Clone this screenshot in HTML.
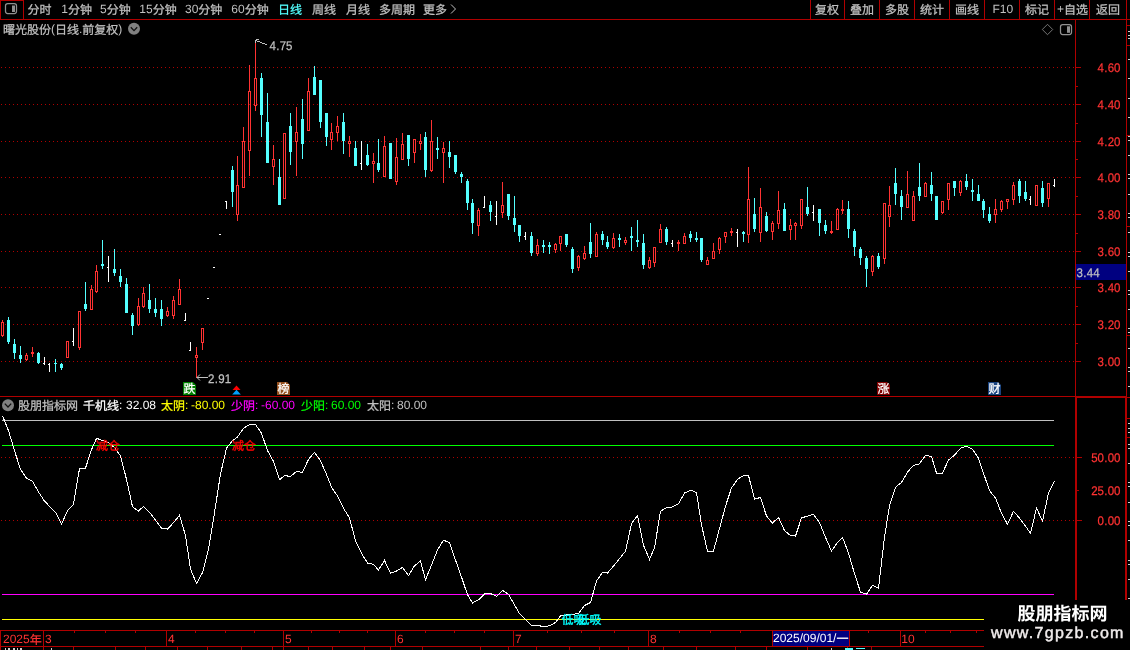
<!DOCTYPE html>
<html><head><meta charset="utf-8"><title>chart</title>
<style>
html,body{margin:0;padding:0;background:#000;overflow:hidden}
svg{display:block;font-family:"Liberation Sans","Noto Sans CJK SC",sans-serif;will-change:transform;text-rendering:geometricPrecision}
</style></head><body>
<svg width="1130" height="650" viewBox="0 0 1130 650">
<rect width="1130" height="650" fill="#000"/>
<g shape-rendering="crispEdges"><path shape-rendering="crispEdges" fill="#b00000" d="M0 0h24v1h-24zM0 0h1v20h-1zM23 0h1v20h-1zM0 19h1130v1h-1130zM810 0h1v20h-1zM844 0h1v20h-1zM879 0h1v20h-1zM914 0h1v20h-1zM949 0h1v20h-1zM984 0h1v20h-1zM1019 0h1v20h-1zM1054 0h1v20h-1zM1089 0h1v20h-1zM1126 0h1v397h-1zM1125 396h2v204h-2zM1075 19h1v378h-1zM1075 396h2v204h-2zM0 396h1076v1h-1076zM1075 396h52v2h-52zM1126 397h4v1h-4zM1126 25h4v1h-4zM1126 45h4v1h-4zM1127 335h3v1h-3zM1127 418h3v1h-3zM1127 437h3v1h-3zM1127 135h3v1h-3zM1127 226h3v1h-3zM0 630h984v1h-984zM0 646h984v1h-984zM0 630h1v20h-1zM1 67h1v1h-1zM5 67h1v1h-1zM9 67h1v1h-1zM13 67h1v1h-1zM17 67h1v1h-1zM21 67h1v1h-1zM25 67h1v1h-1zM29 67h1v1h-1zM33 67h1v1h-1zM37 67h1v1h-1zM41 67h1v1h-1zM45 67h1v1h-1zM49 67h1v1h-1zM53 67h1v1h-1zM57 67h1v1h-1zM61 67h1v1h-1zM65 67h1v1h-1zM69 67h1v1h-1zM73 67h1v1h-1zM77 67h1v1h-1zM81 67h1v1h-1zM85 67h1v1h-1zM89 67h1v1h-1zM93 67h1v1h-1zM97 67h1v1h-1zM101 67h1v1h-1zM105 67h1v1h-1zM109 67h1v1h-1zM113 67h1v1h-1zM117 67h1v1h-1zM121 67h1v1h-1zM125 67h1v1h-1zM129 67h1v1h-1zM133 67h1v1h-1zM137 67h1v1h-1zM141 67h1v1h-1zM145 67h1v1h-1zM149 67h1v1h-1zM153 67h1v1h-1zM157 67h1v1h-1zM161 67h1v1h-1zM165 67h1v1h-1zM169 67h1v1h-1zM173 67h1v1h-1zM177 67h1v1h-1zM181 67h1v1h-1zM185 67h1v1h-1zM189 67h1v1h-1zM193 67h1v1h-1zM197 67h1v1h-1zM201 67h1v1h-1zM205 67h1v1h-1zM209 67h1v1h-1zM213 67h1v1h-1zM217 67h1v1h-1zM221 67h1v1h-1zM225 67h1v1h-1zM229 67h1v1h-1zM233 67h1v1h-1zM237 67h1v1h-1zM241 67h1v1h-1zM245 67h1v1h-1zM249 67h1v1h-1zM253 67h1v1h-1zM257 67h1v1h-1zM261 67h1v1h-1zM265 67h1v1h-1zM269 67h1v1h-1zM273 67h1v1h-1zM277 67h1v1h-1zM281 67h1v1h-1zM285 67h1v1h-1zM289 67h1v1h-1zM293 67h1v1h-1zM297 67h1v1h-1zM301 67h1v1h-1zM305 67h1v1h-1zM309 67h1v1h-1zM313 67h1v1h-1zM317 67h1v1h-1zM321 67h1v1h-1zM325 67h1v1h-1zM329 67h1v1h-1zM333 67h1v1h-1zM337 67h1v1h-1zM341 67h1v1h-1zM345 67h1v1h-1zM349 67h1v1h-1zM353 67h1v1h-1zM357 67h1v1h-1zM361 67h1v1h-1zM365 67h1v1h-1zM369 67h1v1h-1zM373 67h1v1h-1zM377 67h1v1h-1zM381 67h1v1h-1zM385 67h1v1h-1zM389 67h1v1h-1zM393 67h1v1h-1zM397 67h1v1h-1zM401 67h1v1h-1zM405 67h1v1h-1zM409 67h1v1h-1zM413 67h1v1h-1zM417 67h1v1h-1zM421 67h1v1h-1zM425 67h1v1h-1zM429 67h1v1h-1zM433 67h1v1h-1zM437 67h1v1h-1zM441 67h1v1h-1zM445 67h1v1h-1zM449 67h1v1h-1zM453 67h1v1h-1zM457 67h1v1h-1zM461 67h1v1h-1zM465 67h1v1h-1zM469 67h1v1h-1zM473 67h1v1h-1zM477 67h1v1h-1zM481 67h1v1h-1zM485 67h1v1h-1zM489 67h1v1h-1zM493 67h1v1h-1zM497 67h1v1h-1zM501 67h1v1h-1zM505 67h1v1h-1zM509 67h1v1h-1zM513 67h1v1h-1zM517 67h1v1h-1zM521 67h1v1h-1zM525 67h1v1h-1zM529 67h1v1h-1zM533 67h1v1h-1zM537 67h1v1h-1zM541 67h1v1h-1zM545 67h1v1h-1zM549 67h1v1h-1zM553 67h1v1h-1zM557 67h1v1h-1zM561 67h1v1h-1zM565 67h1v1h-1zM569 67h1v1h-1zM573 67h1v1h-1zM577 67h1v1h-1zM581 67h1v1h-1zM585 67h1v1h-1zM589 67h1v1h-1zM593 67h1v1h-1zM597 67h1v1h-1zM601 67h1v1h-1zM605 67h1v1h-1zM609 67h1v1h-1zM613 67h1v1h-1zM617 67h1v1h-1zM621 67h1v1h-1zM625 67h1v1h-1zM629 67h1v1h-1zM633 67h1v1h-1zM637 67h1v1h-1zM641 67h1v1h-1zM645 67h1v1h-1zM649 67h1v1h-1zM653 67h1v1h-1zM657 67h1v1h-1zM661 67h1v1h-1zM665 67h1v1h-1zM669 67h1v1h-1zM673 67h1v1h-1zM677 67h1v1h-1zM681 67h1v1h-1zM685 67h1v1h-1zM689 67h1v1h-1zM693 67h1v1h-1zM697 67h1v1h-1zM701 67h1v1h-1zM705 67h1v1h-1zM709 67h1v1h-1zM713 67h1v1h-1zM717 67h1v1h-1zM721 67h1v1h-1zM725 67h1v1h-1zM729 67h1v1h-1zM733 67h1v1h-1zM737 67h1v1h-1zM741 67h1v1h-1zM745 67h1v1h-1zM749 67h1v1h-1zM753 67h1v1h-1zM757 67h1v1h-1zM761 67h1v1h-1zM765 67h1v1h-1zM769 67h1v1h-1zM773 67h1v1h-1zM777 67h1v1h-1zM781 67h1v1h-1zM785 67h1v1h-1zM789 67h1v1h-1zM793 67h1v1h-1zM797 67h1v1h-1zM801 67h1v1h-1zM805 67h1v1h-1zM809 67h1v1h-1zM813 67h1v1h-1zM817 67h1v1h-1zM821 67h1v1h-1zM825 67h1v1h-1zM829 67h1v1h-1zM833 67h1v1h-1zM837 67h1v1h-1zM841 67h1v1h-1zM845 67h1v1h-1zM849 67h1v1h-1zM853 67h1v1h-1zM857 67h1v1h-1zM861 67h1v1h-1zM865 67h1v1h-1zM869 67h1v1h-1zM873 67h1v1h-1zM877 67h1v1h-1zM881 67h1v1h-1zM885 67h1v1h-1zM889 67h1v1h-1zM893 67h1v1h-1zM897 67h1v1h-1zM901 67h1v1h-1zM905 67h1v1h-1zM909 67h1v1h-1zM913 67h1v1h-1zM917 67h1v1h-1zM921 67h1v1h-1zM925 67h1v1h-1zM929 67h1v1h-1zM933 67h1v1h-1zM937 67h1v1h-1zM941 67h1v1h-1zM945 67h1v1h-1zM949 67h1v1h-1zM953 67h1v1h-1zM957 67h1v1h-1zM961 67h1v1h-1zM965 67h1v1h-1zM969 67h1v1h-1zM973 67h1v1h-1zM977 67h1v1h-1zM981 67h1v1h-1zM985 67h1v1h-1zM989 67h1v1h-1zM993 67h1v1h-1zM997 67h1v1h-1zM1001 67h1v1h-1zM1005 67h1v1h-1zM1009 67h1v1h-1zM1013 67h1v1h-1zM1017 67h1v1h-1zM1021 67h1v1h-1zM1025 67h1v1h-1zM1029 67h1v1h-1zM1033 67h1v1h-1zM1037 67h1v1h-1zM1041 67h1v1h-1zM1045 67h1v1h-1zM1049 67h1v1h-1zM1053 67h1v1h-1zM1057 67h1v1h-1zM1061 67h1v1h-1zM1065 67h1v1h-1zM1069 67h1v1h-1zM1073 67h1v1h-1zM1076 67h5v1h-5zM1 104h1v1h-1zM5 104h1v1h-1zM9 104h1v1h-1zM13 104h1v1h-1zM17 104h1v1h-1zM21 104h1v1h-1zM25 104h1v1h-1zM29 104h1v1h-1zM33 104h1v1h-1zM37 104h1v1h-1zM41 104h1v1h-1zM45 104h1v1h-1zM49 104h1v1h-1zM53 104h1v1h-1zM57 104h1v1h-1zM61 104h1v1h-1zM65 104h1v1h-1zM69 104h1v1h-1zM73 104h1v1h-1zM77 104h1v1h-1zM81 104h1v1h-1zM85 104h1v1h-1zM89 104h1v1h-1zM93 104h1v1h-1zM97 104h1v1h-1zM101 104h1v1h-1zM105 104h1v1h-1zM109 104h1v1h-1zM113 104h1v1h-1zM117 104h1v1h-1zM121 104h1v1h-1zM125 104h1v1h-1zM129 104h1v1h-1zM133 104h1v1h-1zM137 104h1v1h-1zM141 104h1v1h-1zM145 104h1v1h-1zM149 104h1v1h-1zM153 104h1v1h-1zM157 104h1v1h-1zM161 104h1v1h-1zM165 104h1v1h-1zM169 104h1v1h-1zM173 104h1v1h-1zM177 104h1v1h-1zM181 104h1v1h-1zM185 104h1v1h-1zM189 104h1v1h-1zM193 104h1v1h-1zM197 104h1v1h-1zM201 104h1v1h-1zM205 104h1v1h-1zM209 104h1v1h-1zM213 104h1v1h-1zM217 104h1v1h-1zM221 104h1v1h-1zM225 104h1v1h-1zM229 104h1v1h-1zM233 104h1v1h-1zM237 104h1v1h-1zM241 104h1v1h-1zM245 104h1v1h-1zM249 104h1v1h-1zM253 104h1v1h-1zM257 104h1v1h-1zM261 104h1v1h-1zM265 104h1v1h-1zM269 104h1v1h-1zM273 104h1v1h-1zM277 104h1v1h-1zM281 104h1v1h-1zM285 104h1v1h-1zM289 104h1v1h-1zM293 104h1v1h-1zM297 104h1v1h-1zM301 104h1v1h-1zM305 104h1v1h-1zM309 104h1v1h-1zM313 104h1v1h-1zM317 104h1v1h-1zM321 104h1v1h-1zM325 104h1v1h-1zM329 104h1v1h-1zM333 104h1v1h-1zM337 104h1v1h-1zM341 104h1v1h-1zM345 104h1v1h-1zM349 104h1v1h-1zM353 104h1v1h-1zM357 104h1v1h-1zM361 104h1v1h-1zM365 104h1v1h-1zM369 104h1v1h-1zM373 104h1v1h-1zM377 104h1v1h-1zM381 104h1v1h-1zM385 104h1v1h-1zM389 104h1v1h-1zM393 104h1v1h-1zM397 104h1v1h-1zM401 104h1v1h-1zM405 104h1v1h-1zM409 104h1v1h-1zM413 104h1v1h-1zM417 104h1v1h-1zM421 104h1v1h-1zM425 104h1v1h-1zM429 104h1v1h-1zM433 104h1v1h-1zM437 104h1v1h-1zM441 104h1v1h-1zM445 104h1v1h-1zM449 104h1v1h-1zM453 104h1v1h-1zM457 104h1v1h-1zM461 104h1v1h-1zM465 104h1v1h-1zM469 104h1v1h-1zM473 104h1v1h-1zM477 104h1v1h-1zM481 104h1v1h-1zM485 104h1v1h-1zM489 104h1v1h-1zM493 104h1v1h-1zM497 104h1v1h-1zM501 104h1v1h-1zM505 104h1v1h-1zM509 104h1v1h-1zM513 104h1v1h-1zM517 104h1v1h-1zM521 104h1v1h-1zM525 104h1v1h-1zM529 104h1v1h-1zM533 104h1v1h-1zM537 104h1v1h-1zM541 104h1v1h-1zM545 104h1v1h-1zM549 104h1v1h-1zM553 104h1v1h-1zM557 104h1v1h-1zM561 104h1v1h-1zM565 104h1v1h-1zM569 104h1v1h-1zM573 104h1v1h-1zM577 104h1v1h-1zM581 104h1v1h-1zM585 104h1v1h-1zM589 104h1v1h-1zM593 104h1v1h-1zM597 104h1v1h-1zM601 104h1v1h-1zM605 104h1v1h-1zM609 104h1v1h-1zM613 104h1v1h-1zM617 104h1v1h-1zM621 104h1v1h-1zM625 104h1v1h-1zM629 104h1v1h-1zM633 104h1v1h-1zM637 104h1v1h-1zM641 104h1v1h-1zM645 104h1v1h-1zM649 104h1v1h-1zM653 104h1v1h-1zM657 104h1v1h-1zM661 104h1v1h-1zM665 104h1v1h-1zM669 104h1v1h-1zM673 104h1v1h-1zM677 104h1v1h-1zM681 104h1v1h-1zM685 104h1v1h-1zM689 104h1v1h-1zM693 104h1v1h-1zM697 104h1v1h-1zM701 104h1v1h-1zM705 104h1v1h-1zM709 104h1v1h-1zM713 104h1v1h-1zM717 104h1v1h-1zM721 104h1v1h-1zM725 104h1v1h-1zM729 104h1v1h-1zM733 104h1v1h-1zM737 104h1v1h-1zM741 104h1v1h-1zM745 104h1v1h-1zM749 104h1v1h-1zM753 104h1v1h-1zM757 104h1v1h-1zM761 104h1v1h-1zM765 104h1v1h-1zM769 104h1v1h-1zM773 104h1v1h-1zM777 104h1v1h-1zM781 104h1v1h-1zM785 104h1v1h-1zM789 104h1v1h-1zM793 104h1v1h-1zM797 104h1v1h-1zM801 104h1v1h-1zM805 104h1v1h-1zM809 104h1v1h-1zM813 104h1v1h-1zM817 104h1v1h-1zM821 104h1v1h-1zM825 104h1v1h-1zM829 104h1v1h-1zM833 104h1v1h-1zM837 104h1v1h-1zM841 104h1v1h-1zM845 104h1v1h-1zM849 104h1v1h-1zM853 104h1v1h-1zM857 104h1v1h-1zM861 104h1v1h-1zM865 104h1v1h-1zM869 104h1v1h-1zM873 104h1v1h-1zM877 104h1v1h-1zM881 104h1v1h-1zM885 104h1v1h-1zM889 104h1v1h-1zM893 104h1v1h-1zM897 104h1v1h-1zM901 104h1v1h-1zM905 104h1v1h-1zM909 104h1v1h-1zM913 104h1v1h-1zM917 104h1v1h-1zM921 104h1v1h-1zM925 104h1v1h-1zM929 104h1v1h-1zM933 104h1v1h-1zM937 104h1v1h-1zM941 104h1v1h-1zM945 104h1v1h-1zM949 104h1v1h-1zM953 104h1v1h-1zM957 104h1v1h-1zM961 104h1v1h-1zM965 104h1v1h-1zM969 104h1v1h-1zM973 104h1v1h-1zM977 104h1v1h-1zM981 104h1v1h-1zM985 104h1v1h-1zM989 104h1v1h-1zM993 104h1v1h-1zM997 104h1v1h-1zM1001 104h1v1h-1zM1005 104h1v1h-1zM1009 104h1v1h-1zM1013 104h1v1h-1zM1017 104h1v1h-1zM1021 104h1v1h-1zM1025 104h1v1h-1zM1029 104h1v1h-1zM1033 104h1v1h-1zM1037 104h1v1h-1zM1041 104h1v1h-1zM1045 104h1v1h-1zM1049 104h1v1h-1zM1053 104h1v1h-1zM1057 104h1v1h-1zM1061 104h1v1h-1zM1065 104h1v1h-1zM1069 104h1v1h-1zM1073 104h1v1h-1zM1076 104h5v1h-5zM1 141h1v1h-1zM5 141h1v1h-1zM9 141h1v1h-1zM13 141h1v1h-1zM17 141h1v1h-1zM21 141h1v1h-1zM25 141h1v1h-1zM29 141h1v1h-1zM33 141h1v1h-1zM37 141h1v1h-1zM41 141h1v1h-1zM45 141h1v1h-1zM49 141h1v1h-1zM53 141h1v1h-1zM57 141h1v1h-1zM61 141h1v1h-1zM65 141h1v1h-1zM69 141h1v1h-1zM73 141h1v1h-1zM77 141h1v1h-1zM81 141h1v1h-1zM85 141h1v1h-1zM89 141h1v1h-1zM93 141h1v1h-1zM97 141h1v1h-1zM101 141h1v1h-1zM105 141h1v1h-1zM109 141h1v1h-1zM113 141h1v1h-1zM117 141h1v1h-1zM121 141h1v1h-1zM125 141h1v1h-1zM129 141h1v1h-1zM133 141h1v1h-1zM137 141h1v1h-1zM141 141h1v1h-1zM145 141h1v1h-1zM149 141h1v1h-1zM153 141h1v1h-1zM157 141h1v1h-1zM161 141h1v1h-1zM165 141h1v1h-1zM169 141h1v1h-1zM173 141h1v1h-1zM177 141h1v1h-1zM181 141h1v1h-1zM185 141h1v1h-1zM189 141h1v1h-1zM193 141h1v1h-1zM197 141h1v1h-1zM201 141h1v1h-1zM205 141h1v1h-1zM209 141h1v1h-1zM213 141h1v1h-1zM217 141h1v1h-1zM221 141h1v1h-1zM225 141h1v1h-1zM229 141h1v1h-1zM233 141h1v1h-1zM237 141h1v1h-1zM241 141h1v1h-1zM245 141h1v1h-1zM249 141h1v1h-1zM253 141h1v1h-1zM257 141h1v1h-1zM261 141h1v1h-1zM265 141h1v1h-1zM269 141h1v1h-1zM273 141h1v1h-1zM277 141h1v1h-1zM281 141h1v1h-1zM285 141h1v1h-1zM289 141h1v1h-1zM293 141h1v1h-1zM297 141h1v1h-1zM301 141h1v1h-1zM305 141h1v1h-1zM309 141h1v1h-1zM313 141h1v1h-1zM317 141h1v1h-1zM321 141h1v1h-1zM325 141h1v1h-1zM329 141h1v1h-1zM333 141h1v1h-1zM337 141h1v1h-1zM341 141h1v1h-1zM345 141h1v1h-1zM349 141h1v1h-1zM353 141h1v1h-1zM357 141h1v1h-1zM361 141h1v1h-1zM365 141h1v1h-1zM369 141h1v1h-1zM373 141h1v1h-1zM377 141h1v1h-1zM381 141h1v1h-1zM385 141h1v1h-1zM389 141h1v1h-1zM393 141h1v1h-1zM397 141h1v1h-1zM401 141h1v1h-1zM405 141h1v1h-1zM409 141h1v1h-1zM413 141h1v1h-1zM417 141h1v1h-1zM421 141h1v1h-1zM425 141h1v1h-1zM429 141h1v1h-1zM433 141h1v1h-1zM437 141h1v1h-1zM441 141h1v1h-1zM445 141h1v1h-1zM449 141h1v1h-1zM453 141h1v1h-1zM457 141h1v1h-1zM461 141h1v1h-1zM465 141h1v1h-1zM469 141h1v1h-1zM473 141h1v1h-1zM477 141h1v1h-1zM481 141h1v1h-1zM485 141h1v1h-1zM489 141h1v1h-1zM493 141h1v1h-1zM497 141h1v1h-1zM501 141h1v1h-1zM505 141h1v1h-1zM509 141h1v1h-1zM513 141h1v1h-1zM517 141h1v1h-1zM521 141h1v1h-1zM525 141h1v1h-1zM529 141h1v1h-1zM533 141h1v1h-1zM537 141h1v1h-1zM541 141h1v1h-1zM545 141h1v1h-1zM549 141h1v1h-1zM553 141h1v1h-1zM557 141h1v1h-1zM561 141h1v1h-1zM565 141h1v1h-1zM569 141h1v1h-1zM573 141h1v1h-1zM577 141h1v1h-1zM581 141h1v1h-1zM585 141h1v1h-1zM589 141h1v1h-1zM593 141h1v1h-1zM597 141h1v1h-1zM601 141h1v1h-1zM605 141h1v1h-1zM609 141h1v1h-1zM613 141h1v1h-1zM617 141h1v1h-1zM621 141h1v1h-1zM625 141h1v1h-1zM629 141h1v1h-1zM633 141h1v1h-1zM637 141h1v1h-1zM641 141h1v1h-1zM645 141h1v1h-1zM649 141h1v1h-1zM653 141h1v1h-1zM657 141h1v1h-1zM661 141h1v1h-1zM665 141h1v1h-1zM669 141h1v1h-1zM673 141h1v1h-1zM677 141h1v1h-1zM681 141h1v1h-1zM685 141h1v1h-1zM689 141h1v1h-1zM693 141h1v1h-1zM697 141h1v1h-1zM701 141h1v1h-1zM705 141h1v1h-1zM709 141h1v1h-1zM713 141h1v1h-1zM717 141h1v1h-1zM721 141h1v1h-1zM725 141h1v1h-1zM729 141h1v1h-1zM733 141h1v1h-1zM737 141h1v1h-1zM741 141h1v1h-1zM745 141h1v1h-1zM749 141h1v1h-1zM753 141h1v1h-1zM757 141h1v1h-1zM761 141h1v1h-1zM765 141h1v1h-1zM769 141h1v1h-1zM773 141h1v1h-1zM777 141h1v1h-1zM781 141h1v1h-1zM785 141h1v1h-1zM789 141h1v1h-1zM793 141h1v1h-1zM797 141h1v1h-1zM801 141h1v1h-1zM805 141h1v1h-1zM809 141h1v1h-1zM813 141h1v1h-1zM817 141h1v1h-1zM821 141h1v1h-1zM825 141h1v1h-1zM829 141h1v1h-1zM833 141h1v1h-1zM837 141h1v1h-1zM841 141h1v1h-1zM845 141h1v1h-1zM849 141h1v1h-1zM853 141h1v1h-1zM857 141h1v1h-1zM861 141h1v1h-1zM865 141h1v1h-1zM869 141h1v1h-1zM873 141h1v1h-1zM877 141h1v1h-1zM881 141h1v1h-1zM885 141h1v1h-1zM889 141h1v1h-1zM893 141h1v1h-1zM897 141h1v1h-1zM901 141h1v1h-1zM905 141h1v1h-1zM909 141h1v1h-1zM913 141h1v1h-1zM917 141h1v1h-1zM921 141h1v1h-1zM925 141h1v1h-1zM929 141h1v1h-1zM933 141h1v1h-1zM937 141h1v1h-1zM941 141h1v1h-1zM945 141h1v1h-1zM949 141h1v1h-1zM953 141h1v1h-1zM957 141h1v1h-1zM961 141h1v1h-1zM965 141h1v1h-1zM969 141h1v1h-1zM973 141h1v1h-1zM977 141h1v1h-1zM981 141h1v1h-1zM985 141h1v1h-1zM989 141h1v1h-1zM993 141h1v1h-1zM997 141h1v1h-1zM1001 141h1v1h-1zM1005 141h1v1h-1zM1009 141h1v1h-1zM1013 141h1v1h-1zM1017 141h1v1h-1zM1021 141h1v1h-1zM1025 141h1v1h-1zM1029 141h1v1h-1zM1033 141h1v1h-1zM1037 141h1v1h-1zM1041 141h1v1h-1zM1045 141h1v1h-1zM1049 141h1v1h-1zM1053 141h1v1h-1zM1057 141h1v1h-1zM1061 141h1v1h-1zM1065 141h1v1h-1zM1069 141h1v1h-1zM1073 141h1v1h-1zM1076 141h5v1h-5zM1 177h1v1h-1zM5 177h1v1h-1zM9 177h1v1h-1zM13 177h1v1h-1zM17 177h1v1h-1zM21 177h1v1h-1zM25 177h1v1h-1zM29 177h1v1h-1zM33 177h1v1h-1zM37 177h1v1h-1zM41 177h1v1h-1zM45 177h1v1h-1zM49 177h1v1h-1zM53 177h1v1h-1zM57 177h1v1h-1zM61 177h1v1h-1zM65 177h1v1h-1zM69 177h1v1h-1zM73 177h1v1h-1zM77 177h1v1h-1zM81 177h1v1h-1zM85 177h1v1h-1zM89 177h1v1h-1zM93 177h1v1h-1zM97 177h1v1h-1zM101 177h1v1h-1zM105 177h1v1h-1zM109 177h1v1h-1zM113 177h1v1h-1zM117 177h1v1h-1zM121 177h1v1h-1zM125 177h1v1h-1zM129 177h1v1h-1zM133 177h1v1h-1zM137 177h1v1h-1zM141 177h1v1h-1zM145 177h1v1h-1zM149 177h1v1h-1zM153 177h1v1h-1zM157 177h1v1h-1zM161 177h1v1h-1zM165 177h1v1h-1zM169 177h1v1h-1zM173 177h1v1h-1zM177 177h1v1h-1zM181 177h1v1h-1zM185 177h1v1h-1zM189 177h1v1h-1zM193 177h1v1h-1zM197 177h1v1h-1zM201 177h1v1h-1zM205 177h1v1h-1zM209 177h1v1h-1zM213 177h1v1h-1zM217 177h1v1h-1zM221 177h1v1h-1zM225 177h1v1h-1zM229 177h1v1h-1zM233 177h1v1h-1zM237 177h1v1h-1zM241 177h1v1h-1zM245 177h1v1h-1zM249 177h1v1h-1zM253 177h1v1h-1zM257 177h1v1h-1zM261 177h1v1h-1zM265 177h1v1h-1zM269 177h1v1h-1zM273 177h1v1h-1zM277 177h1v1h-1zM281 177h1v1h-1zM285 177h1v1h-1zM289 177h1v1h-1zM293 177h1v1h-1zM297 177h1v1h-1zM301 177h1v1h-1zM305 177h1v1h-1zM309 177h1v1h-1zM313 177h1v1h-1zM317 177h1v1h-1zM321 177h1v1h-1zM325 177h1v1h-1zM329 177h1v1h-1zM333 177h1v1h-1zM337 177h1v1h-1zM341 177h1v1h-1zM345 177h1v1h-1zM349 177h1v1h-1zM353 177h1v1h-1zM357 177h1v1h-1zM361 177h1v1h-1zM365 177h1v1h-1zM369 177h1v1h-1zM373 177h1v1h-1zM377 177h1v1h-1zM381 177h1v1h-1zM385 177h1v1h-1zM389 177h1v1h-1zM393 177h1v1h-1zM397 177h1v1h-1zM401 177h1v1h-1zM405 177h1v1h-1zM409 177h1v1h-1zM413 177h1v1h-1zM417 177h1v1h-1zM421 177h1v1h-1zM425 177h1v1h-1zM429 177h1v1h-1zM433 177h1v1h-1zM437 177h1v1h-1zM441 177h1v1h-1zM445 177h1v1h-1zM449 177h1v1h-1zM453 177h1v1h-1zM457 177h1v1h-1zM461 177h1v1h-1zM465 177h1v1h-1zM469 177h1v1h-1zM473 177h1v1h-1zM477 177h1v1h-1zM481 177h1v1h-1zM485 177h1v1h-1zM489 177h1v1h-1zM493 177h1v1h-1zM497 177h1v1h-1zM501 177h1v1h-1zM505 177h1v1h-1zM509 177h1v1h-1zM513 177h1v1h-1zM517 177h1v1h-1zM521 177h1v1h-1zM525 177h1v1h-1zM529 177h1v1h-1zM533 177h1v1h-1zM537 177h1v1h-1zM541 177h1v1h-1zM545 177h1v1h-1zM549 177h1v1h-1zM553 177h1v1h-1zM557 177h1v1h-1zM561 177h1v1h-1zM565 177h1v1h-1zM569 177h1v1h-1zM573 177h1v1h-1zM577 177h1v1h-1zM581 177h1v1h-1zM585 177h1v1h-1zM589 177h1v1h-1zM593 177h1v1h-1zM597 177h1v1h-1zM601 177h1v1h-1zM605 177h1v1h-1zM609 177h1v1h-1zM613 177h1v1h-1zM617 177h1v1h-1zM621 177h1v1h-1zM625 177h1v1h-1zM629 177h1v1h-1zM633 177h1v1h-1zM637 177h1v1h-1zM641 177h1v1h-1zM645 177h1v1h-1zM649 177h1v1h-1zM653 177h1v1h-1zM657 177h1v1h-1zM661 177h1v1h-1zM665 177h1v1h-1zM669 177h1v1h-1zM673 177h1v1h-1zM677 177h1v1h-1zM681 177h1v1h-1zM685 177h1v1h-1zM689 177h1v1h-1zM693 177h1v1h-1zM697 177h1v1h-1zM701 177h1v1h-1zM705 177h1v1h-1zM709 177h1v1h-1zM713 177h1v1h-1zM717 177h1v1h-1zM721 177h1v1h-1zM725 177h1v1h-1zM729 177h1v1h-1zM733 177h1v1h-1zM737 177h1v1h-1zM741 177h1v1h-1zM745 177h1v1h-1zM749 177h1v1h-1zM753 177h1v1h-1zM757 177h1v1h-1zM761 177h1v1h-1zM765 177h1v1h-1zM769 177h1v1h-1zM773 177h1v1h-1zM777 177h1v1h-1zM781 177h1v1h-1zM785 177h1v1h-1zM789 177h1v1h-1zM793 177h1v1h-1zM797 177h1v1h-1zM801 177h1v1h-1zM805 177h1v1h-1zM809 177h1v1h-1zM813 177h1v1h-1zM817 177h1v1h-1zM821 177h1v1h-1zM825 177h1v1h-1zM829 177h1v1h-1zM833 177h1v1h-1zM837 177h1v1h-1zM841 177h1v1h-1zM845 177h1v1h-1zM849 177h1v1h-1zM853 177h1v1h-1zM857 177h1v1h-1zM861 177h1v1h-1zM865 177h1v1h-1zM869 177h1v1h-1zM873 177h1v1h-1zM877 177h1v1h-1zM881 177h1v1h-1zM885 177h1v1h-1zM889 177h1v1h-1zM893 177h1v1h-1zM897 177h1v1h-1zM901 177h1v1h-1zM905 177h1v1h-1zM909 177h1v1h-1zM913 177h1v1h-1zM917 177h1v1h-1zM921 177h1v1h-1zM925 177h1v1h-1zM929 177h1v1h-1zM933 177h1v1h-1zM937 177h1v1h-1zM941 177h1v1h-1zM945 177h1v1h-1zM949 177h1v1h-1zM953 177h1v1h-1zM957 177h1v1h-1zM961 177h1v1h-1zM965 177h1v1h-1zM969 177h1v1h-1zM973 177h1v1h-1zM977 177h1v1h-1zM981 177h1v1h-1zM985 177h1v1h-1zM989 177h1v1h-1zM993 177h1v1h-1zM997 177h1v1h-1zM1001 177h1v1h-1zM1005 177h1v1h-1zM1009 177h1v1h-1zM1013 177h1v1h-1zM1017 177h1v1h-1zM1021 177h1v1h-1zM1025 177h1v1h-1zM1029 177h1v1h-1zM1033 177h1v1h-1zM1037 177h1v1h-1zM1041 177h1v1h-1zM1045 177h1v1h-1zM1049 177h1v1h-1zM1053 177h1v1h-1zM1057 177h1v1h-1zM1061 177h1v1h-1zM1065 177h1v1h-1zM1069 177h1v1h-1zM1073 177h1v1h-1zM1076 177h5v1h-5zM1 214h1v1h-1zM5 214h1v1h-1zM9 214h1v1h-1zM13 214h1v1h-1zM17 214h1v1h-1zM21 214h1v1h-1zM25 214h1v1h-1zM29 214h1v1h-1zM33 214h1v1h-1zM37 214h1v1h-1zM41 214h1v1h-1zM45 214h1v1h-1zM49 214h1v1h-1zM53 214h1v1h-1zM57 214h1v1h-1zM61 214h1v1h-1zM65 214h1v1h-1zM69 214h1v1h-1zM73 214h1v1h-1zM77 214h1v1h-1zM81 214h1v1h-1zM85 214h1v1h-1zM89 214h1v1h-1zM93 214h1v1h-1zM97 214h1v1h-1zM101 214h1v1h-1zM105 214h1v1h-1zM109 214h1v1h-1zM113 214h1v1h-1zM117 214h1v1h-1zM121 214h1v1h-1zM125 214h1v1h-1zM129 214h1v1h-1zM133 214h1v1h-1zM137 214h1v1h-1zM141 214h1v1h-1zM145 214h1v1h-1zM149 214h1v1h-1zM153 214h1v1h-1zM157 214h1v1h-1zM161 214h1v1h-1zM165 214h1v1h-1zM169 214h1v1h-1zM173 214h1v1h-1zM177 214h1v1h-1zM181 214h1v1h-1zM185 214h1v1h-1zM189 214h1v1h-1zM193 214h1v1h-1zM197 214h1v1h-1zM201 214h1v1h-1zM205 214h1v1h-1zM209 214h1v1h-1zM213 214h1v1h-1zM217 214h1v1h-1zM221 214h1v1h-1zM225 214h1v1h-1zM229 214h1v1h-1zM233 214h1v1h-1zM237 214h1v1h-1zM241 214h1v1h-1zM245 214h1v1h-1zM249 214h1v1h-1zM253 214h1v1h-1zM257 214h1v1h-1zM261 214h1v1h-1zM265 214h1v1h-1zM269 214h1v1h-1zM273 214h1v1h-1zM277 214h1v1h-1zM281 214h1v1h-1zM285 214h1v1h-1zM289 214h1v1h-1zM293 214h1v1h-1zM297 214h1v1h-1zM301 214h1v1h-1zM305 214h1v1h-1zM309 214h1v1h-1zM313 214h1v1h-1zM317 214h1v1h-1zM321 214h1v1h-1zM325 214h1v1h-1zM329 214h1v1h-1zM333 214h1v1h-1zM337 214h1v1h-1zM341 214h1v1h-1zM345 214h1v1h-1zM349 214h1v1h-1zM353 214h1v1h-1zM357 214h1v1h-1zM361 214h1v1h-1zM365 214h1v1h-1zM369 214h1v1h-1zM373 214h1v1h-1zM377 214h1v1h-1zM381 214h1v1h-1zM385 214h1v1h-1zM389 214h1v1h-1zM393 214h1v1h-1zM397 214h1v1h-1zM401 214h1v1h-1zM405 214h1v1h-1zM409 214h1v1h-1zM413 214h1v1h-1zM417 214h1v1h-1zM421 214h1v1h-1zM425 214h1v1h-1zM429 214h1v1h-1zM433 214h1v1h-1zM437 214h1v1h-1zM441 214h1v1h-1zM445 214h1v1h-1zM449 214h1v1h-1zM453 214h1v1h-1zM457 214h1v1h-1zM461 214h1v1h-1zM465 214h1v1h-1zM469 214h1v1h-1zM473 214h1v1h-1zM477 214h1v1h-1zM481 214h1v1h-1zM485 214h1v1h-1zM489 214h1v1h-1zM493 214h1v1h-1zM497 214h1v1h-1zM501 214h1v1h-1zM505 214h1v1h-1zM509 214h1v1h-1zM513 214h1v1h-1zM517 214h1v1h-1zM521 214h1v1h-1zM525 214h1v1h-1zM529 214h1v1h-1zM533 214h1v1h-1zM537 214h1v1h-1zM541 214h1v1h-1zM545 214h1v1h-1zM549 214h1v1h-1zM553 214h1v1h-1zM557 214h1v1h-1zM561 214h1v1h-1zM565 214h1v1h-1zM569 214h1v1h-1zM573 214h1v1h-1zM577 214h1v1h-1zM581 214h1v1h-1zM585 214h1v1h-1zM589 214h1v1h-1zM593 214h1v1h-1zM597 214h1v1h-1zM601 214h1v1h-1zM605 214h1v1h-1zM609 214h1v1h-1zM613 214h1v1h-1zM617 214h1v1h-1zM621 214h1v1h-1zM625 214h1v1h-1zM629 214h1v1h-1zM633 214h1v1h-1zM637 214h1v1h-1zM641 214h1v1h-1zM645 214h1v1h-1zM649 214h1v1h-1zM653 214h1v1h-1zM657 214h1v1h-1zM661 214h1v1h-1zM665 214h1v1h-1zM669 214h1v1h-1zM673 214h1v1h-1zM677 214h1v1h-1zM681 214h1v1h-1zM685 214h1v1h-1zM689 214h1v1h-1zM693 214h1v1h-1zM697 214h1v1h-1zM701 214h1v1h-1zM705 214h1v1h-1zM709 214h1v1h-1zM713 214h1v1h-1zM717 214h1v1h-1zM721 214h1v1h-1zM725 214h1v1h-1zM729 214h1v1h-1zM733 214h1v1h-1zM737 214h1v1h-1zM741 214h1v1h-1zM745 214h1v1h-1zM749 214h1v1h-1zM753 214h1v1h-1zM757 214h1v1h-1zM761 214h1v1h-1zM765 214h1v1h-1zM769 214h1v1h-1zM773 214h1v1h-1zM777 214h1v1h-1zM781 214h1v1h-1zM785 214h1v1h-1zM789 214h1v1h-1zM793 214h1v1h-1zM797 214h1v1h-1zM801 214h1v1h-1zM805 214h1v1h-1zM809 214h1v1h-1zM813 214h1v1h-1zM817 214h1v1h-1zM821 214h1v1h-1zM825 214h1v1h-1zM829 214h1v1h-1zM833 214h1v1h-1zM837 214h1v1h-1zM841 214h1v1h-1zM845 214h1v1h-1zM849 214h1v1h-1zM853 214h1v1h-1zM857 214h1v1h-1zM861 214h1v1h-1zM865 214h1v1h-1zM869 214h1v1h-1zM873 214h1v1h-1zM877 214h1v1h-1zM881 214h1v1h-1zM885 214h1v1h-1zM889 214h1v1h-1zM893 214h1v1h-1zM897 214h1v1h-1zM901 214h1v1h-1zM905 214h1v1h-1zM909 214h1v1h-1zM913 214h1v1h-1zM917 214h1v1h-1zM921 214h1v1h-1zM925 214h1v1h-1zM929 214h1v1h-1zM933 214h1v1h-1zM937 214h1v1h-1zM941 214h1v1h-1zM945 214h1v1h-1zM949 214h1v1h-1zM953 214h1v1h-1zM957 214h1v1h-1zM961 214h1v1h-1zM965 214h1v1h-1zM969 214h1v1h-1zM973 214h1v1h-1zM977 214h1v1h-1zM981 214h1v1h-1zM985 214h1v1h-1zM989 214h1v1h-1zM993 214h1v1h-1zM997 214h1v1h-1zM1001 214h1v1h-1zM1005 214h1v1h-1zM1009 214h1v1h-1zM1013 214h1v1h-1zM1017 214h1v1h-1zM1021 214h1v1h-1zM1025 214h1v1h-1zM1029 214h1v1h-1zM1033 214h1v1h-1zM1037 214h1v1h-1zM1041 214h1v1h-1zM1045 214h1v1h-1zM1049 214h1v1h-1zM1053 214h1v1h-1zM1057 214h1v1h-1zM1061 214h1v1h-1zM1065 214h1v1h-1zM1069 214h1v1h-1zM1073 214h1v1h-1zM1076 214h5v1h-5zM1 251h1v1h-1zM5 251h1v1h-1zM9 251h1v1h-1zM13 251h1v1h-1zM17 251h1v1h-1zM21 251h1v1h-1zM25 251h1v1h-1zM29 251h1v1h-1zM33 251h1v1h-1zM37 251h1v1h-1zM41 251h1v1h-1zM45 251h1v1h-1zM49 251h1v1h-1zM53 251h1v1h-1zM57 251h1v1h-1zM61 251h1v1h-1zM65 251h1v1h-1zM69 251h1v1h-1zM73 251h1v1h-1zM77 251h1v1h-1zM81 251h1v1h-1zM85 251h1v1h-1zM89 251h1v1h-1zM93 251h1v1h-1zM97 251h1v1h-1zM101 251h1v1h-1zM105 251h1v1h-1zM109 251h1v1h-1zM113 251h1v1h-1zM117 251h1v1h-1zM121 251h1v1h-1zM125 251h1v1h-1zM129 251h1v1h-1zM133 251h1v1h-1zM137 251h1v1h-1zM141 251h1v1h-1zM145 251h1v1h-1zM149 251h1v1h-1zM153 251h1v1h-1zM157 251h1v1h-1zM161 251h1v1h-1zM165 251h1v1h-1zM169 251h1v1h-1zM173 251h1v1h-1zM177 251h1v1h-1zM181 251h1v1h-1zM185 251h1v1h-1zM189 251h1v1h-1zM193 251h1v1h-1zM197 251h1v1h-1zM201 251h1v1h-1zM205 251h1v1h-1zM209 251h1v1h-1zM213 251h1v1h-1zM217 251h1v1h-1zM221 251h1v1h-1zM225 251h1v1h-1zM229 251h1v1h-1zM233 251h1v1h-1zM237 251h1v1h-1zM241 251h1v1h-1zM245 251h1v1h-1zM249 251h1v1h-1zM253 251h1v1h-1zM257 251h1v1h-1zM261 251h1v1h-1zM265 251h1v1h-1zM269 251h1v1h-1zM273 251h1v1h-1zM277 251h1v1h-1zM281 251h1v1h-1zM285 251h1v1h-1zM289 251h1v1h-1zM293 251h1v1h-1zM297 251h1v1h-1zM301 251h1v1h-1zM305 251h1v1h-1zM309 251h1v1h-1zM313 251h1v1h-1zM317 251h1v1h-1zM321 251h1v1h-1zM325 251h1v1h-1zM329 251h1v1h-1zM333 251h1v1h-1zM337 251h1v1h-1zM341 251h1v1h-1zM345 251h1v1h-1zM349 251h1v1h-1zM353 251h1v1h-1zM357 251h1v1h-1zM361 251h1v1h-1zM365 251h1v1h-1zM369 251h1v1h-1zM373 251h1v1h-1zM377 251h1v1h-1zM381 251h1v1h-1zM385 251h1v1h-1zM389 251h1v1h-1zM393 251h1v1h-1zM397 251h1v1h-1zM401 251h1v1h-1zM405 251h1v1h-1zM409 251h1v1h-1zM413 251h1v1h-1zM417 251h1v1h-1zM421 251h1v1h-1zM425 251h1v1h-1zM429 251h1v1h-1zM433 251h1v1h-1zM437 251h1v1h-1zM441 251h1v1h-1zM445 251h1v1h-1zM449 251h1v1h-1zM453 251h1v1h-1zM457 251h1v1h-1zM461 251h1v1h-1zM465 251h1v1h-1zM469 251h1v1h-1zM473 251h1v1h-1zM477 251h1v1h-1zM481 251h1v1h-1zM485 251h1v1h-1zM489 251h1v1h-1zM493 251h1v1h-1zM497 251h1v1h-1zM501 251h1v1h-1zM505 251h1v1h-1zM509 251h1v1h-1zM513 251h1v1h-1zM517 251h1v1h-1zM521 251h1v1h-1zM525 251h1v1h-1zM529 251h1v1h-1zM533 251h1v1h-1zM537 251h1v1h-1zM541 251h1v1h-1zM545 251h1v1h-1zM549 251h1v1h-1zM553 251h1v1h-1zM557 251h1v1h-1zM561 251h1v1h-1zM565 251h1v1h-1zM569 251h1v1h-1zM573 251h1v1h-1zM577 251h1v1h-1zM581 251h1v1h-1zM585 251h1v1h-1zM589 251h1v1h-1zM593 251h1v1h-1zM597 251h1v1h-1zM601 251h1v1h-1zM605 251h1v1h-1zM609 251h1v1h-1zM613 251h1v1h-1zM617 251h1v1h-1zM621 251h1v1h-1zM625 251h1v1h-1zM629 251h1v1h-1zM633 251h1v1h-1zM637 251h1v1h-1zM641 251h1v1h-1zM645 251h1v1h-1zM649 251h1v1h-1zM653 251h1v1h-1zM657 251h1v1h-1zM661 251h1v1h-1zM665 251h1v1h-1zM669 251h1v1h-1zM673 251h1v1h-1zM677 251h1v1h-1zM681 251h1v1h-1zM685 251h1v1h-1zM689 251h1v1h-1zM693 251h1v1h-1zM697 251h1v1h-1zM701 251h1v1h-1zM705 251h1v1h-1zM709 251h1v1h-1zM713 251h1v1h-1zM717 251h1v1h-1zM721 251h1v1h-1zM725 251h1v1h-1zM729 251h1v1h-1zM733 251h1v1h-1zM737 251h1v1h-1zM741 251h1v1h-1zM745 251h1v1h-1zM749 251h1v1h-1zM753 251h1v1h-1zM757 251h1v1h-1zM761 251h1v1h-1zM765 251h1v1h-1zM769 251h1v1h-1zM773 251h1v1h-1zM777 251h1v1h-1zM781 251h1v1h-1zM785 251h1v1h-1zM789 251h1v1h-1zM793 251h1v1h-1zM797 251h1v1h-1zM801 251h1v1h-1zM805 251h1v1h-1zM809 251h1v1h-1zM813 251h1v1h-1zM817 251h1v1h-1zM821 251h1v1h-1zM825 251h1v1h-1zM829 251h1v1h-1zM833 251h1v1h-1zM837 251h1v1h-1zM841 251h1v1h-1zM845 251h1v1h-1zM849 251h1v1h-1zM853 251h1v1h-1zM857 251h1v1h-1zM861 251h1v1h-1zM865 251h1v1h-1zM869 251h1v1h-1zM873 251h1v1h-1zM877 251h1v1h-1zM881 251h1v1h-1zM885 251h1v1h-1zM889 251h1v1h-1zM893 251h1v1h-1zM897 251h1v1h-1zM901 251h1v1h-1zM905 251h1v1h-1zM909 251h1v1h-1zM913 251h1v1h-1zM917 251h1v1h-1zM921 251h1v1h-1zM925 251h1v1h-1zM929 251h1v1h-1zM933 251h1v1h-1zM937 251h1v1h-1zM941 251h1v1h-1zM945 251h1v1h-1zM949 251h1v1h-1zM953 251h1v1h-1zM957 251h1v1h-1zM961 251h1v1h-1zM965 251h1v1h-1zM969 251h1v1h-1zM973 251h1v1h-1zM977 251h1v1h-1zM981 251h1v1h-1zM985 251h1v1h-1zM989 251h1v1h-1zM993 251h1v1h-1zM997 251h1v1h-1zM1001 251h1v1h-1zM1005 251h1v1h-1zM1009 251h1v1h-1zM1013 251h1v1h-1zM1017 251h1v1h-1zM1021 251h1v1h-1zM1025 251h1v1h-1zM1029 251h1v1h-1zM1033 251h1v1h-1zM1037 251h1v1h-1zM1041 251h1v1h-1zM1045 251h1v1h-1zM1049 251h1v1h-1zM1053 251h1v1h-1zM1057 251h1v1h-1zM1061 251h1v1h-1zM1065 251h1v1h-1zM1069 251h1v1h-1zM1073 251h1v1h-1zM1076 251h5v1h-5zM1 287h1v1h-1zM5 287h1v1h-1zM9 287h1v1h-1zM13 287h1v1h-1zM17 287h1v1h-1zM21 287h1v1h-1zM25 287h1v1h-1zM29 287h1v1h-1zM33 287h1v1h-1zM37 287h1v1h-1zM41 287h1v1h-1zM45 287h1v1h-1zM49 287h1v1h-1zM53 287h1v1h-1zM57 287h1v1h-1zM61 287h1v1h-1zM65 287h1v1h-1zM69 287h1v1h-1zM73 287h1v1h-1zM77 287h1v1h-1zM81 287h1v1h-1zM85 287h1v1h-1zM89 287h1v1h-1zM93 287h1v1h-1zM97 287h1v1h-1zM101 287h1v1h-1zM105 287h1v1h-1zM109 287h1v1h-1zM113 287h1v1h-1zM117 287h1v1h-1zM121 287h1v1h-1zM125 287h1v1h-1zM129 287h1v1h-1zM133 287h1v1h-1zM137 287h1v1h-1zM141 287h1v1h-1zM145 287h1v1h-1zM149 287h1v1h-1zM153 287h1v1h-1zM157 287h1v1h-1zM161 287h1v1h-1zM165 287h1v1h-1zM169 287h1v1h-1zM173 287h1v1h-1zM177 287h1v1h-1zM181 287h1v1h-1zM185 287h1v1h-1zM189 287h1v1h-1zM193 287h1v1h-1zM197 287h1v1h-1zM201 287h1v1h-1zM205 287h1v1h-1zM209 287h1v1h-1zM213 287h1v1h-1zM217 287h1v1h-1zM221 287h1v1h-1zM225 287h1v1h-1zM229 287h1v1h-1zM233 287h1v1h-1zM237 287h1v1h-1zM241 287h1v1h-1zM245 287h1v1h-1zM249 287h1v1h-1zM253 287h1v1h-1zM257 287h1v1h-1zM261 287h1v1h-1zM265 287h1v1h-1zM269 287h1v1h-1zM273 287h1v1h-1zM277 287h1v1h-1zM281 287h1v1h-1zM285 287h1v1h-1zM289 287h1v1h-1zM293 287h1v1h-1zM297 287h1v1h-1zM301 287h1v1h-1zM305 287h1v1h-1zM309 287h1v1h-1zM313 287h1v1h-1zM317 287h1v1h-1zM321 287h1v1h-1zM325 287h1v1h-1zM329 287h1v1h-1zM333 287h1v1h-1zM337 287h1v1h-1zM341 287h1v1h-1zM345 287h1v1h-1zM349 287h1v1h-1zM353 287h1v1h-1zM357 287h1v1h-1zM361 287h1v1h-1zM365 287h1v1h-1zM369 287h1v1h-1zM373 287h1v1h-1zM377 287h1v1h-1zM381 287h1v1h-1zM385 287h1v1h-1zM389 287h1v1h-1zM393 287h1v1h-1zM397 287h1v1h-1zM401 287h1v1h-1zM405 287h1v1h-1zM409 287h1v1h-1zM413 287h1v1h-1zM417 287h1v1h-1zM421 287h1v1h-1zM425 287h1v1h-1zM429 287h1v1h-1zM433 287h1v1h-1zM437 287h1v1h-1zM441 287h1v1h-1zM445 287h1v1h-1zM449 287h1v1h-1zM453 287h1v1h-1zM457 287h1v1h-1zM461 287h1v1h-1zM465 287h1v1h-1zM469 287h1v1h-1zM473 287h1v1h-1zM477 287h1v1h-1zM481 287h1v1h-1zM485 287h1v1h-1zM489 287h1v1h-1zM493 287h1v1h-1zM497 287h1v1h-1zM501 287h1v1h-1zM505 287h1v1h-1zM509 287h1v1h-1zM513 287h1v1h-1zM517 287h1v1h-1zM521 287h1v1h-1zM525 287h1v1h-1zM529 287h1v1h-1zM533 287h1v1h-1zM537 287h1v1h-1zM541 287h1v1h-1zM545 287h1v1h-1zM549 287h1v1h-1zM553 287h1v1h-1zM557 287h1v1h-1zM561 287h1v1h-1zM565 287h1v1h-1zM569 287h1v1h-1zM573 287h1v1h-1zM577 287h1v1h-1zM581 287h1v1h-1zM585 287h1v1h-1zM589 287h1v1h-1zM593 287h1v1h-1zM597 287h1v1h-1zM601 287h1v1h-1zM605 287h1v1h-1zM609 287h1v1h-1zM613 287h1v1h-1zM617 287h1v1h-1zM621 287h1v1h-1zM625 287h1v1h-1zM629 287h1v1h-1zM633 287h1v1h-1zM637 287h1v1h-1zM641 287h1v1h-1zM645 287h1v1h-1zM649 287h1v1h-1zM653 287h1v1h-1zM657 287h1v1h-1zM661 287h1v1h-1zM665 287h1v1h-1zM669 287h1v1h-1zM673 287h1v1h-1zM677 287h1v1h-1zM681 287h1v1h-1zM685 287h1v1h-1zM689 287h1v1h-1zM693 287h1v1h-1zM697 287h1v1h-1zM701 287h1v1h-1zM705 287h1v1h-1zM709 287h1v1h-1zM713 287h1v1h-1zM717 287h1v1h-1zM721 287h1v1h-1zM725 287h1v1h-1zM729 287h1v1h-1zM733 287h1v1h-1zM737 287h1v1h-1zM741 287h1v1h-1zM745 287h1v1h-1zM749 287h1v1h-1zM753 287h1v1h-1zM757 287h1v1h-1zM761 287h1v1h-1zM765 287h1v1h-1zM769 287h1v1h-1zM773 287h1v1h-1zM777 287h1v1h-1zM781 287h1v1h-1zM785 287h1v1h-1zM789 287h1v1h-1zM793 287h1v1h-1zM797 287h1v1h-1zM801 287h1v1h-1zM805 287h1v1h-1zM809 287h1v1h-1zM813 287h1v1h-1zM817 287h1v1h-1zM821 287h1v1h-1zM825 287h1v1h-1zM829 287h1v1h-1zM833 287h1v1h-1zM837 287h1v1h-1zM841 287h1v1h-1zM845 287h1v1h-1zM849 287h1v1h-1zM853 287h1v1h-1zM857 287h1v1h-1zM861 287h1v1h-1zM865 287h1v1h-1zM869 287h1v1h-1zM873 287h1v1h-1zM877 287h1v1h-1zM881 287h1v1h-1zM885 287h1v1h-1zM889 287h1v1h-1zM893 287h1v1h-1zM897 287h1v1h-1zM901 287h1v1h-1zM905 287h1v1h-1zM909 287h1v1h-1zM913 287h1v1h-1zM917 287h1v1h-1zM921 287h1v1h-1zM925 287h1v1h-1zM929 287h1v1h-1zM933 287h1v1h-1zM937 287h1v1h-1zM941 287h1v1h-1zM945 287h1v1h-1zM949 287h1v1h-1zM953 287h1v1h-1zM957 287h1v1h-1zM961 287h1v1h-1zM965 287h1v1h-1zM969 287h1v1h-1zM973 287h1v1h-1zM977 287h1v1h-1zM981 287h1v1h-1zM985 287h1v1h-1zM989 287h1v1h-1zM993 287h1v1h-1zM997 287h1v1h-1zM1001 287h1v1h-1zM1005 287h1v1h-1zM1009 287h1v1h-1zM1013 287h1v1h-1zM1017 287h1v1h-1zM1021 287h1v1h-1zM1025 287h1v1h-1zM1029 287h1v1h-1zM1033 287h1v1h-1zM1037 287h1v1h-1zM1041 287h1v1h-1zM1045 287h1v1h-1zM1049 287h1v1h-1zM1053 287h1v1h-1zM1057 287h1v1h-1zM1061 287h1v1h-1zM1065 287h1v1h-1zM1069 287h1v1h-1zM1073 287h1v1h-1zM1076 287h5v1h-5zM1 324h1v1h-1zM5 324h1v1h-1zM9 324h1v1h-1zM13 324h1v1h-1zM17 324h1v1h-1zM21 324h1v1h-1zM25 324h1v1h-1zM29 324h1v1h-1zM33 324h1v1h-1zM37 324h1v1h-1zM41 324h1v1h-1zM45 324h1v1h-1zM49 324h1v1h-1zM53 324h1v1h-1zM57 324h1v1h-1zM61 324h1v1h-1zM65 324h1v1h-1zM69 324h1v1h-1zM73 324h1v1h-1zM77 324h1v1h-1zM81 324h1v1h-1zM85 324h1v1h-1zM89 324h1v1h-1zM93 324h1v1h-1zM97 324h1v1h-1zM101 324h1v1h-1zM105 324h1v1h-1zM109 324h1v1h-1zM113 324h1v1h-1zM117 324h1v1h-1zM121 324h1v1h-1zM125 324h1v1h-1zM129 324h1v1h-1zM133 324h1v1h-1zM137 324h1v1h-1zM141 324h1v1h-1zM145 324h1v1h-1zM149 324h1v1h-1zM153 324h1v1h-1zM157 324h1v1h-1zM161 324h1v1h-1zM165 324h1v1h-1zM169 324h1v1h-1zM173 324h1v1h-1zM177 324h1v1h-1zM181 324h1v1h-1zM185 324h1v1h-1zM189 324h1v1h-1zM193 324h1v1h-1zM197 324h1v1h-1zM201 324h1v1h-1zM205 324h1v1h-1zM209 324h1v1h-1zM213 324h1v1h-1zM217 324h1v1h-1zM221 324h1v1h-1zM225 324h1v1h-1zM229 324h1v1h-1zM233 324h1v1h-1zM237 324h1v1h-1zM241 324h1v1h-1zM245 324h1v1h-1zM249 324h1v1h-1zM253 324h1v1h-1zM257 324h1v1h-1zM261 324h1v1h-1zM265 324h1v1h-1zM269 324h1v1h-1zM273 324h1v1h-1zM277 324h1v1h-1zM281 324h1v1h-1zM285 324h1v1h-1zM289 324h1v1h-1zM293 324h1v1h-1zM297 324h1v1h-1zM301 324h1v1h-1zM305 324h1v1h-1zM309 324h1v1h-1zM313 324h1v1h-1zM317 324h1v1h-1zM321 324h1v1h-1zM325 324h1v1h-1zM329 324h1v1h-1zM333 324h1v1h-1zM337 324h1v1h-1zM341 324h1v1h-1zM345 324h1v1h-1zM349 324h1v1h-1zM353 324h1v1h-1zM357 324h1v1h-1zM361 324h1v1h-1zM365 324h1v1h-1zM369 324h1v1h-1zM373 324h1v1h-1zM377 324h1v1h-1zM381 324h1v1h-1zM385 324h1v1h-1zM389 324h1v1h-1zM393 324h1v1h-1zM397 324h1v1h-1zM401 324h1v1h-1zM405 324h1v1h-1zM409 324h1v1h-1zM413 324h1v1h-1zM417 324h1v1h-1zM421 324h1v1h-1zM425 324h1v1h-1zM429 324h1v1h-1zM433 324h1v1h-1zM437 324h1v1h-1zM441 324h1v1h-1zM445 324h1v1h-1zM449 324h1v1h-1zM453 324h1v1h-1zM457 324h1v1h-1zM461 324h1v1h-1zM465 324h1v1h-1zM469 324h1v1h-1zM473 324h1v1h-1zM477 324h1v1h-1zM481 324h1v1h-1zM485 324h1v1h-1zM489 324h1v1h-1zM493 324h1v1h-1zM497 324h1v1h-1zM501 324h1v1h-1zM505 324h1v1h-1zM509 324h1v1h-1zM513 324h1v1h-1zM517 324h1v1h-1zM521 324h1v1h-1zM525 324h1v1h-1zM529 324h1v1h-1zM533 324h1v1h-1zM537 324h1v1h-1zM541 324h1v1h-1zM545 324h1v1h-1zM549 324h1v1h-1zM553 324h1v1h-1zM557 324h1v1h-1zM561 324h1v1h-1zM565 324h1v1h-1zM569 324h1v1h-1zM573 324h1v1h-1zM577 324h1v1h-1zM581 324h1v1h-1zM585 324h1v1h-1zM589 324h1v1h-1zM593 324h1v1h-1zM597 324h1v1h-1zM601 324h1v1h-1zM605 324h1v1h-1zM609 324h1v1h-1zM613 324h1v1h-1zM617 324h1v1h-1zM621 324h1v1h-1zM625 324h1v1h-1zM629 324h1v1h-1zM633 324h1v1h-1zM637 324h1v1h-1zM641 324h1v1h-1zM645 324h1v1h-1zM649 324h1v1h-1zM653 324h1v1h-1zM657 324h1v1h-1zM661 324h1v1h-1zM665 324h1v1h-1zM669 324h1v1h-1zM673 324h1v1h-1zM677 324h1v1h-1zM681 324h1v1h-1zM685 324h1v1h-1zM689 324h1v1h-1zM693 324h1v1h-1zM697 324h1v1h-1zM701 324h1v1h-1zM705 324h1v1h-1zM709 324h1v1h-1zM713 324h1v1h-1zM717 324h1v1h-1zM721 324h1v1h-1zM725 324h1v1h-1zM729 324h1v1h-1zM733 324h1v1h-1zM737 324h1v1h-1zM741 324h1v1h-1zM745 324h1v1h-1zM749 324h1v1h-1zM753 324h1v1h-1zM757 324h1v1h-1zM761 324h1v1h-1zM765 324h1v1h-1zM769 324h1v1h-1zM773 324h1v1h-1zM777 324h1v1h-1zM781 324h1v1h-1zM785 324h1v1h-1zM789 324h1v1h-1zM793 324h1v1h-1zM797 324h1v1h-1zM801 324h1v1h-1zM805 324h1v1h-1zM809 324h1v1h-1zM813 324h1v1h-1zM817 324h1v1h-1zM821 324h1v1h-1zM825 324h1v1h-1zM829 324h1v1h-1zM833 324h1v1h-1zM837 324h1v1h-1zM841 324h1v1h-1zM845 324h1v1h-1zM849 324h1v1h-1zM853 324h1v1h-1zM857 324h1v1h-1zM861 324h1v1h-1zM865 324h1v1h-1zM869 324h1v1h-1zM873 324h1v1h-1zM877 324h1v1h-1zM881 324h1v1h-1zM885 324h1v1h-1zM889 324h1v1h-1zM893 324h1v1h-1zM897 324h1v1h-1zM901 324h1v1h-1zM905 324h1v1h-1zM909 324h1v1h-1zM913 324h1v1h-1zM917 324h1v1h-1zM921 324h1v1h-1zM925 324h1v1h-1zM929 324h1v1h-1zM933 324h1v1h-1zM937 324h1v1h-1zM941 324h1v1h-1zM945 324h1v1h-1zM949 324h1v1h-1zM953 324h1v1h-1zM957 324h1v1h-1zM961 324h1v1h-1zM965 324h1v1h-1zM969 324h1v1h-1zM973 324h1v1h-1zM977 324h1v1h-1zM981 324h1v1h-1zM985 324h1v1h-1zM989 324h1v1h-1zM993 324h1v1h-1zM997 324h1v1h-1zM1001 324h1v1h-1zM1005 324h1v1h-1zM1009 324h1v1h-1zM1013 324h1v1h-1zM1017 324h1v1h-1zM1021 324h1v1h-1zM1025 324h1v1h-1zM1029 324h1v1h-1zM1033 324h1v1h-1zM1037 324h1v1h-1zM1041 324h1v1h-1zM1045 324h1v1h-1zM1049 324h1v1h-1zM1053 324h1v1h-1zM1057 324h1v1h-1zM1061 324h1v1h-1zM1065 324h1v1h-1zM1069 324h1v1h-1zM1073 324h1v1h-1zM1076 324h5v1h-5zM1 361h1v1h-1zM5 361h1v1h-1zM9 361h1v1h-1zM13 361h1v1h-1zM17 361h1v1h-1zM21 361h1v1h-1zM25 361h1v1h-1zM29 361h1v1h-1zM33 361h1v1h-1zM37 361h1v1h-1zM41 361h1v1h-1zM45 361h1v1h-1zM49 361h1v1h-1zM53 361h1v1h-1zM57 361h1v1h-1zM61 361h1v1h-1zM65 361h1v1h-1zM69 361h1v1h-1zM73 361h1v1h-1zM77 361h1v1h-1zM81 361h1v1h-1zM85 361h1v1h-1zM89 361h1v1h-1zM93 361h1v1h-1zM97 361h1v1h-1zM101 361h1v1h-1zM105 361h1v1h-1zM109 361h1v1h-1zM113 361h1v1h-1zM117 361h1v1h-1zM121 361h1v1h-1zM125 361h1v1h-1zM129 361h1v1h-1zM133 361h1v1h-1zM137 361h1v1h-1zM141 361h1v1h-1zM145 361h1v1h-1zM149 361h1v1h-1zM153 361h1v1h-1zM157 361h1v1h-1zM161 361h1v1h-1zM165 361h1v1h-1zM169 361h1v1h-1zM173 361h1v1h-1zM177 361h1v1h-1zM181 361h1v1h-1zM185 361h1v1h-1zM189 361h1v1h-1zM193 361h1v1h-1zM197 361h1v1h-1zM201 361h1v1h-1zM205 361h1v1h-1zM209 361h1v1h-1zM213 361h1v1h-1zM217 361h1v1h-1zM221 361h1v1h-1zM225 361h1v1h-1zM229 361h1v1h-1zM233 361h1v1h-1zM237 361h1v1h-1zM241 361h1v1h-1zM245 361h1v1h-1zM249 361h1v1h-1zM253 361h1v1h-1zM257 361h1v1h-1zM261 361h1v1h-1zM265 361h1v1h-1zM269 361h1v1h-1zM273 361h1v1h-1zM277 361h1v1h-1zM281 361h1v1h-1zM285 361h1v1h-1zM289 361h1v1h-1zM293 361h1v1h-1zM297 361h1v1h-1zM301 361h1v1h-1zM305 361h1v1h-1zM309 361h1v1h-1zM313 361h1v1h-1zM317 361h1v1h-1zM321 361h1v1h-1zM325 361h1v1h-1zM329 361h1v1h-1zM333 361h1v1h-1zM337 361h1v1h-1zM341 361h1v1h-1zM345 361h1v1h-1zM349 361h1v1h-1zM353 361h1v1h-1zM357 361h1v1h-1zM361 361h1v1h-1zM365 361h1v1h-1zM369 361h1v1h-1zM373 361h1v1h-1zM377 361h1v1h-1zM381 361h1v1h-1zM385 361h1v1h-1zM389 361h1v1h-1zM393 361h1v1h-1zM397 361h1v1h-1zM401 361h1v1h-1zM405 361h1v1h-1zM409 361h1v1h-1zM413 361h1v1h-1zM417 361h1v1h-1zM421 361h1v1h-1zM425 361h1v1h-1zM429 361h1v1h-1zM433 361h1v1h-1zM437 361h1v1h-1zM441 361h1v1h-1zM445 361h1v1h-1zM449 361h1v1h-1zM453 361h1v1h-1zM457 361h1v1h-1zM461 361h1v1h-1zM465 361h1v1h-1zM469 361h1v1h-1zM473 361h1v1h-1zM477 361h1v1h-1zM481 361h1v1h-1zM485 361h1v1h-1zM489 361h1v1h-1zM493 361h1v1h-1zM497 361h1v1h-1zM501 361h1v1h-1zM505 361h1v1h-1zM509 361h1v1h-1zM513 361h1v1h-1zM517 361h1v1h-1zM521 361h1v1h-1zM525 361h1v1h-1zM529 361h1v1h-1zM533 361h1v1h-1zM537 361h1v1h-1zM541 361h1v1h-1zM545 361h1v1h-1zM549 361h1v1h-1zM553 361h1v1h-1zM557 361h1v1h-1zM561 361h1v1h-1zM565 361h1v1h-1zM569 361h1v1h-1zM573 361h1v1h-1zM577 361h1v1h-1zM581 361h1v1h-1zM585 361h1v1h-1zM589 361h1v1h-1zM593 361h1v1h-1zM597 361h1v1h-1zM601 361h1v1h-1zM605 361h1v1h-1zM609 361h1v1h-1zM613 361h1v1h-1zM617 361h1v1h-1zM621 361h1v1h-1zM625 361h1v1h-1zM629 361h1v1h-1zM633 361h1v1h-1zM637 361h1v1h-1zM641 361h1v1h-1zM645 361h1v1h-1zM649 361h1v1h-1zM653 361h1v1h-1zM657 361h1v1h-1zM661 361h1v1h-1zM665 361h1v1h-1zM669 361h1v1h-1zM673 361h1v1h-1zM677 361h1v1h-1zM681 361h1v1h-1zM685 361h1v1h-1zM689 361h1v1h-1zM693 361h1v1h-1zM697 361h1v1h-1zM701 361h1v1h-1zM705 361h1v1h-1zM709 361h1v1h-1zM713 361h1v1h-1zM717 361h1v1h-1zM721 361h1v1h-1zM725 361h1v1h-1zM729 361h1v1h-1zM733 361h1v1h-1zM737 361h1v1h-1zM741 361h1v1h-1zM745 361h1v1h-1zM749 361h1v1h-1zM753 361h1v1h-1zM757 361h1v1h-1zM761 361h1v1h-1zM765 361h1v1h-1zM769 361h1v1h-1zM773 361h1v1h-1zM777 361h1v1h-1zM781 361h1v1h-1zM785 361h1v1h-1zM789 361h1v1h-1zM793 361h1v1h-1zM797 361h1v1h-1zM801 361h1v1h-1zM805 361h1v1h-1zM809 361h1v1h-1zM813 361h1v1h-1zM817 361h1v1h-1zM821 361h1v1h-1zM825 361h1v1h-1zM829 361h1v1h-1zM833 361h1v1h-1zM837 361h1v1h-1zM841 361h1v1h-1zM845 361h1v1h-1zM849 361h1v1h-1zM853 361h1v1h-1zM857 361h1v1h-1zM861 361h1v1h-1zM865 361h1v1h-1zM869 361h1v1h-1zM873 361h1v1h-1zM877 361h1v1h-1zM881 361h1v1h-1zM885 361h1v1h-1zM889 361h1v1h-1zM893 361h1v1h-1zM897 361h1v1h-1zM901 361h1v1h-1zM905 361h1v1h-1zM909 361h1v1h-1zM913 361h1v1h-1zM917 361h1v1h-1zM921 361h1v1h-1zM925 361h1v1h-1zM929 361h1v1h-1zM933 361h1v1h-1zM937 361h1v1h-1zM941 361h1v1h-1zM945 361h1v1h-1zM949 361h1v1h-1zM953 361h1v1h-1zM957 361h1v1h-1zM961 361h1v1h-1zM965 361h1v1h-1zM969 361h1v1h-1zM973 361h1v1h-1zM977 361h1v1h-1zM981 361h1v1h-1zM985 361h1v1h-1zM989 361h1v1h-1zM993 361h1v1h-1zM997 361h1v1h-1zM1001 361h1v1h-1zM1005 361h1v1h-1zM1009 361h1v1h-1zM1013 361h1v1h-1zM1017 361h1v1h-1zM1021 361h1v1h-1zM1025 361h1v1h-1zM1029 361h1v1h-1zM1033 361h1v1h-1zM1037 361h1v1h-1zM1041 361h1v1h-1zM1045 361h1v1h-1zM1049 361h1v1h-1zM1053 361h1v1h-1zM1057 361h1v1h-1zM1061 361h1v1h-1zM1065 361h1v1h-1zM1069 361h1v1h-1zM1073 361h1v1h-1zM1076 361h5v1h-5zM1076 86h2v1h-2zM1076 123h2v1h-2zM1076 159h2v1h-2zM1076 196h2v1h-2zM1076 233h2v1h-2zM1076 269h2v1h-2zM1076 306h2v1h-2zM1076 343h2v1h-2zM1 457h1v1h-1zM5 457h1v1h-1zM9 457h1v1h-1zM13 457h1v1h-1zM17 457h1v1h-1zM21 457h1v1h-1zM25 457h1v1h-1zM29 457h1v1h-1zM33 457h1v1h-1zM37 457h1v1h-1zM41 457h1v1h-1zM45 457h1v1h-1zM49 457h1v1h-1zM53 457h1v1h-1zM57 457h1v1h-1zM61 457h1v1h-1zM65 457h1v1h-1zM69 457h1v1h-1zM73 457h1v1h-1zM77 457h1v1h-1zM81 457h1v1h-1zM85 457h1v1h-1zM89 457h1v1h-1zM93 457h1v1h-1zM97 457h1v1h-1zM101 457h1v1h-1zM105 457h1v1h-1zM109 457h1v1h-1zM113 457h1v1h-1zM117 457h1v1h-1zM121 457h1v1h-1zM125 457h1v1h-1zM129 457h1v1h-1zM133 457h1v1h-1zM137 457h1v1h-1zM141 457h1v1h-1zM145 457h1v1h-1zM149 457h1v1h-1zM153 457h1v1h-1zM157 457h1v1h-1zM161 457h1v1h-1zM165 457h1v1h-1zM169 457h1v1h-1zM173 457h1v1h-1zM177 457h1v1h-1zM181 457h1v1h-1zM185 457h1v1h-1zM189 457h1v1h-1zM193 457h1v1h-1zM197 457h1v1h-1zM201 457h1v1h-1zM205 457h1v1h-1zM209 457h1v1h-1zM213 457h1v1h-1zM217 457h1v1h-1zM221 457h1v1h-1zM225 457h1v1h-1zM229 457h1v1h-1zM233 457h1v1h-1zM237 457h1v1h-1zM241 457h1v1h-1zM245 457h1v1h-1zM249 457h1v1h-1zM253 457h1v1h-1zM257 457h1v1h-1zM261 457h1v1h-1zM265 457h1v1h-1zM269 457h1v1h-1zM273 457h1v1h-1zM277 457h1v1h-1zM281 457h1v1h-1zM285 457h1v1h-1zM289 457h1v1h-1zM293 457h1v1h-1zM297 457h1v1h-1zM301 457h1v1h-1zM305 457h1v1h-1zM309 457h1v1h-1zM313 457h1v1h-1zM317 457h1v1h-1zM321 457h1v1h-1zM325 457h1v1h-1zM329 457h1v1h-1zM333 457h1v1h-1zM337 457h1v1h-1zM341 457h1v1h-1zM345 457h1v1h-1zM349 457h1v1h-1zM353 457h1v1h-1zM357 457h1v1h-1zM361 457h1v1h-1zM365 457h1v1h-1zM369 457h1v1h-1zM373 457h1v1h-1zM377 457h1v1h-1zM381 457h1v1h-1zM385 457h1v1h-1zM389 457h1v1h-1zM393 457h1v1h-1zM397 457h1v1h-1zM401 457h1v1h-1zM405 457h1v1h-1zM409 457h1v1h-1zM413 457h1v1h-1zM417 457h1v1h-1zM421 457h1v1h-1zM425 457h1v1h-1zM429 457h1v1h-1zM433 457h1v1h-1zM437 457h1v1h-1zM441 457h1v1h-1zM445 457h1v1h-1zM449 457h1v1h-1zM453 457h1v1h-1zM457 457h1v1h-1zM461 457h1v1h-1zM465 457h1v1h-1zM469 457h1v1h-1zM473 457h1v1h-1zM477 457h1v1h-1zM481 457h1v1h-1zM485 457h1v1h-1zM489 457h1v1h-1zM493 457h1v1h-1zM497 457h1v1h-1zM501 457h1v1h-1zM505 457h1v1h-1zM509 457h1v1h-1zM513 457h1v1h-1zM517 457h1v1h-1zM521 457h1v1h-1zM525 457h1v1h-1zM529 457h1v1h-1zM533 457h1v1h-1zM537 457h1v1h-1zM541 457h1v1h-1zM545 457h1v1h-1zM549 457h1v1h-1zM553 457h1v1h-1zM557 457h1v1h-1zM561 457h1v1h-1zM565 457h1v1h-1zM569 457h1v1h-1zM573 457h1v1h-1zM577 457h1v1h-1zM581 457h1v1h-1zM585 457h1v1h-1zM589 457h1v1h-1zM593 457h1v1h-1zM597 457h1v1h-1zM601 457h1v1h-1zM605 457h1v1h-1zM609 457h1v1h-1zM613 457h1v1h-1zM617 457h1v1h-1zM621 457h1v1h-1zM625 457h1v1h-1zM629 457h1v1h-1zM633 457h1v1h-1zM637 457h1v1h-1zM641 457h1v1h-1zM645 457h1v1h-1zM649 457h1v1h-1zM653 457h1v1h-1zM657 457h1v1h-1zM661 457h1v1h-1zM665 457h1v1h-1zM669 457h1v1h-1zM673 457h1v1h-1zM677 457h1v1h-1zM681 457h1v1h-1zM685 457h1v1h-1zM689 457h1v1h-1zM693 457h1v1h-1zM697 457h1v1h-1zM701 457h1v1h-1zM705 457h1v1h-1zM709 457h1v1h-1zM713 457h1v1h-1zM717 457h1v1h-1zM721 457h1v1h-1zM725 457h1v1h-1zM729 457h1v1h-1zM733 457h1v1h-1zM737 457h1v1h-1zM741 457h1v1h-1zM745 457h1v1h-1zM749 457h1v1h-1zM753 457h1v1h-1zM757 457h1v1h-1zM761 457h1v1h-1zM765 457h1v1h-1zM769 457h1v1h-1zM773 457h1v1h-1zM777 457h1v1h-1zM781 457h1v1h-1zM785 457h1v1h-1zM789 457h1v1h-1zM793 457h1v1h-1zM797 457h1v1h-1zM801 457h1v1h-1zM805 457h1v1h-1zM809 457h1v1h-1zM813 457h1v1h-1zM817 457h1v1h-1zM821 457h1v1h-1zM825 457h1v1h-1zM829 457h1v1h-1zM833 457h1v1h-1zM837 457h1v1h-1zM841 457h1v1h-1zM845 457h1v1h-1zM849 457h1v1h-1zM853 457h1v1h-1zM857 457h1v1h-1zM861 457h1v1h-1zM865 457h1v1h-1zM869 457h1v1h-1zM873 457h1v1h-1zM877 457h1v1h-1zM881 457h1v1h-1zM885 457h1v1h-1zM889 457h1v1h-1zM893 457h1v1h-1zM897 457h1v1h-1zM901 457h1v1h-1zM905 457h1v1h-1zM909 457h1v1h-1zM913 457h1v1h-1zM917 457h1v1h-1zM921 457h1v1h-1zM925 457h1v1h-1zM929 457h1v1h-1zM933 457h1v1h-1zM937 457h1v1h-1zM941 457h1v1h-1zM945 457h1v1h-1zM949 457h1v1h-1zM953 457h1v1h-1zM957 457h1v1h-1zM961 457h1v1h-1zM965 457h1v1h-1zM969 457h1v1h-1zM973 457h1v1h-1zM977 457h1v1h-1zM981 457h1v1h-1zM985 457h1v1h-1zM989 457h1v1h-1zM993 457h1v1h-1zM997 457h1v1h-1zM1001 457h1v1h-1zM1005 457h1v1h-1zM1009 457h1v1h-1zM1013 457h1v1h-1zM1017 457h1v1h-1zM1021 457h1v1h-1zM1025 457h1v1h-1zM1029 457h1v1h-1zM1033 457h1v1h-1zM1037 457h1v1h-1zM1041 457h1v1h-1zM1045 457h1v1h-1zM1049 457h1v1h-1zM1053 457h1v1h-1zM1057 457h1v1h-1zM1061 457h1v1h-1zM1065 457h1v1h-1zM1069 457h1v1h-1zM1073 457h1v1h-1zM1077 457h5v1h-5zM1 520h1v1h-1zM5 520h1v1h-1zM9 520h1v1h-1zM13 520h1v1h-1zM17 520h1v1h-1zM21 520h1v1h-1zM25 520h1v1h-1zM29 520h1v1h-1zM33 520h1v1h-1zM37 520h1v1h-1zM41 520h1v1h-1zM45 520h1v1h-1zM49 520h1v1h-1zM53 520h1v1h-1zM57 520h1v1h-1zM61 520h1v1h-1zM65 520h1v1h-1zM69 520h1v1h-1zM73 520h1v1h-1zM77 520h1v1h-1zM81 520h1v1h-1zM85 520h1v1h-1zM89 520h1v1h-1zM93 520h1v1h-1zM97 520h1v1h-1zM101 520h1v1h-1zM105 520h1v1h-1zM109 520h1v1h-1zM113 520h1v1h-1zM117 520h1v1h-1zM121 520h1v1h-1zM125 520h1v1h-1zM129 520h1v1h-1zM133 520h1v1h-1zM137 520h1v1h-1zM141 520h1v1h-1zM145 520h1v1h-1zM149 520h1v1h-1zM153 520h1v1h-1zM157 520h1v1h-1zM161 520h1v1h-1zM165 520h1v1h-1zM169 520h1v1h-1zM173 520h1v1h-1zM177 520h1v1h-1zM181 520h1v1h-1zM185 520h1v1h-1zM189 520h1v1h-1zM193 520h1v1h-1zM197 520h1v1h-1zM201 520h1v1h-1zM205 520h1v1h-1zM209 520h1v1h-1zM213 520h1v1h-1zM217 520h1v1h-1zM221 520h1v1h-1zM225 520h1v1h-1zM229 520h1v1h-1zM233 520h1v1h-1zM237 520h1v1h-1zM241 520h1v1h-1zM245 520h1v1h-1zM249 520h1v1h-1zM253 520h1v1h-1zM257 520h1v1h-1zM261 520h1v1h-1zM265 520h1v1h-1zM269 520h1v1h-1zM273 520h1v1h-1zM277 520h1v1h-1zM281 520h1v1h-1zM285 520h1v1h-1zM289 520h1v1h-1zM293 520h1v1h-1zM297 520h1v1h-1zM301 520h1v1h-1zM305 520h1v1h-1zM309 520h1v1h-1zM313 520h1v1h-1zM317 520h1v1h-1zM321 520h1v1h-1zM325 520h1v1h-1zM329 520h1v1h-1zM333 520h1v1h-1zM337 520h1v1h-1zM341 520h1v1h-1zM345 520h1v1h-1zM349 520h1v1h-1zM353 520h1v1h-1zM357 520h1v1h-1zM361 520h1v1h-1zM365 520h1v1h-1zM369 520h1v1h-1zM373 520h1v1h-1zM377 520h1v1h-1zM381 520h1v1h-1zM385 520h1v1h-1zM389 520h1v1h-1zM393 520h1v1h-1zM397 520h1v1h-1zM401 520h1v1h-1zM405 520h1v1h-1zM409 520h1v1h-1zM413 520h1v1h-1zM417 520h1v1h-1zM421 520h1v1h-1zM425 520h1v1h-1zM429 520h1v1h-1zM433 520h1v1h-1zM437 520h1v1h-1zM441 520h1v1h-1zM445 520h1v1h-1zM449 520h1v1h-1zM453 520h1v1h-1zM457 520h1v1h-1zM461 520h1v1h-1zM465 520h1v1h-1zM469 520h1v1h-1zM473 520h1v1h-1zM477 520h1v1h-1zM481 520h1v1h-1zM485 520h1v1h-1zM489 520h1v1h-1zM493 520h1v1h-1zM497 520h1v1h-1zM501 520h1v1h-1zM505 520h1v1h-1zM509 520h1v1h-1zM513 520h1v1h-1zM517 520h1v1h-1zM521 520h1v1h-1zM525 520h1v1h-1zM529 520h1v1h-1zM533 520h1v1h-1zM537 520h1v1h-1zM541 520h1v1h-1zM545 520h1v1h-1zM549 520h1v1h-1zM553 520h1v1h-1zM557 520h1v1h-1zM561 520h1v1h-1zM565 520h1v1h-1zM569 520h1v1h-1zM573 520h1v1h-1zM577 520h1v1h-1zM581 520h1v1h-1zM585 520h1v1h-1zM589 520h1v1h-1zM593 520h1v1h-1zM597 520h1v1h-1zM601 520h1v1h-1zM605 520h1v1h-1zM609 520h1v1h-1zM613 520h1v1h-1zM617 520h1v1h-1zM621 520h1v1h-1zM625 520h1v1h-1zM629 520h1v1h-1zM633 520h1v1h-1zM637 520h1v1h-1zM641 520h1v1h-1zM645 520h1v1h-1zM649 520h1v1h-1zM653 520h1v1h-1zM657 520h1v1h-1zM661 520h1v1h-1zM665 520h1v1h-1zM669 520h1v1h-1zM673 520h1v1h-1zM677 520h1v1h-1zM681 520h1v1h-1zM685 520h1v1h-1zM689 520h1v1h-1zM693 520h1v1h-1zM697 520h1v1h-1zM701 520h1v1h-1zM705 520h1v1h-1zM709 520h1v1h-1zM713 520h1v1h-1zM717 520h1v1h-1zM721 520h1v1h-1zM725 520h1v1h-1zM729 520h1v1h-1zM733 520h1v1h-1zM737 520h1v1h-1zM741 520h1v1h-1zM745 520h1v1h-1zM749 520h1v1h-1zM753 520h1v1h-1zM757 520h1v1h-1zM761 520h1v1h-1zM765 520h1v1h-1zM769 520h1v1h-1zM773 520h1v1h-1zM777 520h1v1h-1zM781 520h1v1h-1zM785 520h1v1h-1zM789 520h1v1h-1zM793 520h1v1h-1zM797 520h1v1h-1zM801 520h1v1h-1zM805 520h1v1h-1zM809 520h1v1h-1zM813 520h1v1h-1zM817 520h1v1h-1zM821 520h1v1h-1zM825 520h1v1h-1zM829 520h1v1h-1zM833 520h1v1h-1zM837 520h1v1h-1zM841 520h1v1h-1zM845 520h1v1h-1zM849 520h1v1h-1zM853 520h1v1h-1zM857 520h1v1h-1zM861 520h1v1h-1zM865 520h1v1h-1zM869 520h1v1h-1zM873 520h1v1h-1zM877 520h1v1h-1zM881 520h1v1h-1zM885 520h1v1h-1zM889 520h1v1h-1zM893 520h1v1h-1zM897 520h1v1h-1zM901 520h1v1h-1zM905 520h1v1h-1zM909 520h1v1h-1zM913 520h1v1h-1zM917 520h1v1h-1zM921 520h1v1h-1zM925 520h1v1h-1zM929 520h1v1h-1zM933 520h1v1h-1zM937 520h1v1h-1zM941 520h1v1h-1zM945 520h1v1h-1zM949 520h1v1h-1zM953 520h1v1h-1zM957 520h1v1h-1zM961 520h1v1h-1zM965 520h1v1h-1zM969 520h1v1h-1zM973 520h1v1h-1zM977 520h1v1h-1zM981 520h1v1h-1zM985 520h1v1h-1zM989 520h1v1h-1zM993 520h1v1h-1zM997 520h1v1h-1zM1001 520h1v1h-1zM1005 520h1v1h-1zM1009 520h1v1h-1zM1013 520h1v1h-1zM1017 520h1v1h-1zM1021 520h1v1h-1zM1025 520h1v1h-1zM1029 520h1v1h-1zM1033 520h1v1h-1zM1037 520h1v1h-1zM1041 520h1v1h-1zM1045 520h1v1h-1zM1049 520h1v1h-1zM1053 520h1v1h-1zM1057 520h1v1h-1zM1061 520h1v1h-1zM1065 520h1v1h-1zM1069 520h1v1h-1zM1073 520h1v1h-1zM1077 520h5v1h-5zM1077 490h2v1h-2z"/><path shape-rendering="crispEdges" fill="#d0d0d0" d="M1128 59h2v1h-2zM1128 78h2v1h-2zM1128 98h2v1h-2zM1128 117h2v1h-2zM1128 136h2v1h-2zM1128 140h2v1h-2zM1128 155h2v1h-2zM1128 174h2v1h-2zM1128 178h2v1h-2zM1128 194h2v1h-2zM1128 213h2v1h-2zM1128 217h2v1h-2zM1128 232h2v1h-2zM1128 252h2v1h-2zM1128 256h2v1h-2zM1128 271h2v1h-2zM1128 290h2v1h-2zM1128 294h2v1h-2zM1128 309h2v1h-2zM1128 328h2v1h-2zM1128 332h2v1h-2zM1128 348h2v1h-2zM1128 367h2v1h-2zM1128 371h2v1h-2zM1128 386h2v1h-2zM1128 444h2v1h-2zM1128 448h2v1h-2zM1128 463h2v1h-2zM1128 482h2v1h-2zM1128 486h2v1h-2zM1128 502h2v1h-2zM1128 521h2v1h-2zM1128 525h2v1h-2zM1128 540h2v1h-2zM1128 560h2v1h-2zM1128 564h2v1h-2zM1128 579h2v1h-2zM1128 598h2v1h-2zM1128 602h2v1h-2zM1128 31h2v1h-2zM1128 35h2v1h-2zM1128 38h2v1h-2zM1128 423h2v1h-2zM1128 428h2v1h-2zM1128 432h2v1h-2z"/><path shape-rendering="crispEdges" fill="#ff3232" d="M2 320h1v2h-1zM2 336h1v1h-1zM1 322h3v1h-3zM1 335h3v1h-3zM1 323h1v12h-1zM3 323h1v12h-1zM26 353h1v2h-1zM26 360h1v1h-1zM25 355h3v1h-3zM25 359h3v1h-3zM25 356h1v3h-1zM27 356h1v3h-1zM32 347h1v5h-1zM32 354h1v3h-1zM31 352h3v2h-3zM66 341h3v1h-3zM66 357h3v1h-3zM66 342h1v15h-1zM68 342h1v15h-1zM79 348h1v2h-1zM78 311h3v1h-3zM78 347h3v1h-3zM78 312h1v35h-1zM80 312h1v35h-1zM91 285h1v4h-1zM90 289h3v1h-3zM90 309h3v1h-3zM90 290h1v19h-1zM92 290h1v19h-1zM96 265h1v6h-1zM96 292h1v1h-1zM95 271h3v1h-3zM95 291h3v1h-3zM95 272h1v19h-1zM97 272h1v19h-1zM138 298h1v8h-1zM138 325h1v1h-1zM137 306h3v1h-3zM137 324h3v1h-3zM137 307h1v17h-1zM139 307h1v17h-1zM143 287h1v6h-1zM143 307h1v1h-1zM142 293h3v1h-3zM142 306h3v1h-3zM142 294h1v12h-1zM144 294h1v12h-1zM167 307h1v4h-1zM167 316h1v1h-1zM166 311h3v1h-3zM166 315h3v1h-3zM166 312h1v3h-1zM168 312h1v3h-1zM173 296h1v4h-1zM173 316h1v3h-1zM172 300h3v1h-3zM172 315h3v1h-3zM172 301h1v14h-1zM174 301h1v14h-1zM179 279h1v10h-1zM178 289h3v1h-3zM178 304h3v1h-3zM178 290h1v14h-1zM180 290h1v14h-1zM196 347h1v8h-1zM196 358h1v20h-1zM195 355h3v1h-3zM195 357h3v1h-3zM195 356h1v1h-1zM197 356h1v1h-1zM202 343h1v7h-1zM201 328h3v1h-3zM201 342h3v1h-3zM201 329h1v13h-1zM203 329h1v13h-1zM237 156h1v29h-1zM237 215h1v6h-1zM236 185h3v1h-3zM236 214h3v1h-3zM236 186h1v28h-1zM238 186h1v28h-1zM243 127h1v14h-1zM242 141h3v1h-3zM242 187h3v1h-3zM242 142h1v45h-1zM244 142h1v45h-1zM249 65h1v26h-1zM249 151h1v25h-1zM248 91h3v1h-3zM248 150h3v1h-3zM248 92h1v58h-1zM250 92h1v58h-1zM255 43h1v35h-1zM255 106h1v5h-1zM254 78h3v1h-3zM254 105h3v1h-3zM254 79h1v26h-1zM256 79h1v26h-1zM273 145h1v14h-1zM273 167h1v18h-1zM272 159h3v1h-3zM272 166h3v1h-3zM272 160h1v6h-1zM274 160h1v6h-1zM283 133h3v1h-3zM283 198h3v1h-3zM283 134h1v64h-1zM285 134h1v64h-1zM296 107h1v25h-1zM296 142h1v34h-1zM295 132h3v1h-3zM295 141h3v1h-3zM295 133h1v8h-1zM297 133h1v8h-1zM308 78h1v13h-1zM307 91h3v1h-3zM307 130h3v1h-3zM307 92h1v38h-1zM309 92h1v38h-1zM331 123h1v9h-1zM331 140h1v10h-1zM330 132h3v1h-3zM330 139h3v1h-3zM330 133h1v6h-1zM332 133h1v6h-1zM337 116h1v10h-1zM337 133h1v8h-1zM336 126h3v1h-3zM336 132h3v1h-3zM336 127h1v5h-1zM338 127h1v5h-1zM349 136h1v5h-1zM349 144h1v13h-1zM348 141h3v1h-3zM348 143h3v1h-3zM348 142h1v1h-1zM350 142h1v1h-1zM373 153h1v8h-1zM373 164h1v19h-1zM372 161h3v1h-3zM372 163h3v1h-3zM372 162h1v1h-1zM374 162h1v1h-1zM384 136h1v10h-1zM383 146h3v1h-3zM383 176h3v1h-3zM383 147h1v29h-1zM385 147h1v29h-1zM396 138h1v19h-1zM396 182h1v3h-1zM395 157h3v1h-3zM395 181h3v1h-3zM395 158h1v23h-1zM397 158h1v23h-1zM402 133h1v11h-1zM401 144h3v1h-3zM401 159h3v1h-3zM401 145h1v14h-1zM403 145h1v14h-1zM414 153h1v10h-1zM413 139h3v1h-3zM413 152h3v1h-3zM413 140h1v12h-1zM415 140h1v12h-1zM420 134h1v7h-1zM420 144h1v6h-1zM419 141h3v1h-3zM419 143h3v1h-3zM419 142h1v1h-1zM421 142h1v1h-1zM431 120h1v21h-1zM431 171h1v1h-1zM430 141h3v1h-3zM430 170h3v1h-3zM430 142h1v28h-1zM432 142h1v28h-1zM443 142h1v6h-1zM443 153h1v30h-1zM442 148h3v1h-3zM442 152h3v1h-3zM442 149h1v3h-1zM444 149h1v3h-1zM478 208h1v2h-1zM478 226h1v10h-1zM477 210h3v1h-3zM477 225h3v1h-3zM477 211h1v14h-1zM479 211h1v14h-1zM502 182h1v23h-1zM502 213h1v5h-1zM501 205h3v1h-3zM501 212h3v1h-3zM501 206h1v6h-1zM503 206h1v6h-1zM537 239h1v6h-1zM537 254h1v2h-1zM536 245h3v1h-3zM536 253h3v1h-3zM536 246h1v7h-1zM538 246h1v7h-1zM555 243h1v1h-1zM555 250h1v3h-1zM554 244h3v1h-3zM554 249h3v1h-3zM554 245h1v4h-1zM556 245h1v4h-1zM560 244h1v7h-1zM559 236h3v1h-3zM559 243h3v1h-3zM559 237h1v6h-1zM561 237h1v6h-1zM578 255h1v1h-1zM578 268h1v3h-1zM577 256h3v1h-3zM577 267h3v1h-3zM577 257h1v10h-1zM579 257h1v10h-1zM584 246h1v7h-1zM584 259h1v1h-1zM583 253h3v1h-3zM583 258h3v1h-3zM583 254h1v4h-1zM585 254h1v4h-1zM596 232h1v2h-1zM595 234h3v1h-3zM595 256h3v1h-3zM595 235h1v21h-1zM597 235h1v21h-1zM613 233h1v5h-1zM613 248h1v1h-1zM612 238h3v1h-3zM612 247h3v1h-3zM612 239h1v8h-1zM614 239h1v8h-1zM625 237h1v3h-1zM625 243h1v2h-1zM624 240h3v1h-3zM624 242h3v1h-3zM624 241h1v1h-1zM626 241h1v1h-1zM649 257h1v3h-1zM649 268h1v1h-1zM648 260h3v1h-3zM648 267h3v1h-3zM648 261h1v6h-1zM650 261h1v6h-1zM654 263h1v4h-1zM653 247h3v1h-3zM653 262h3v1h-3zM653 248h1v14h-1zM655 248h1v14h-1zM660 224h1v5h-1zM659 229h3v1h-3zM659 242h3v1h-3zM659 230h1v12h-1zM661 230h1v12h-1zM678 240h1v2h-1zM678 244h1v7h-1zM677 242h3v2h-3zM684 233h1v3h-1zM683 236h3v1h-3zM683 243h3v1h-3zM683 237h1v6h-1zM685 237h1v6h-1zM707 257h1v3h-1zM706 260h3v1h-3zM706 264h3v1h-3zM706 261h1v3h-1zM708 261h1v3h-1zM713 243h1v8h-1zM712 251h3v1h-3zM712 258h3v1h-3zM712 252h1v6h-1zM714 252h1v6h-1zM719 237h1v1h-1zM719 250h1v4h-1zM718 238h3v1h-3zM718 249h3v1h-3zM718 239h1v10h-1zM720 239h1v10h-1zM725 237h1v6h-1zM724 232h3v1h-3zM724 236h3v1h-3zM724 233h1v3h-1zM726 233h1v3h-1zM731 228h1v3h-1zM731 233h1v3h-1zM730 231h3v2h-3zM748 167h1v32h-1zM748 235h1v8h-1zM747 199h3v1h-3zM747 234h3v1h-3zM747 200h1v34h-1zM749 200h1v34h-1zM760 188h1v19h-1zM760 233h1v9h-1zM759 207h3v1h-3zM759 232h3v1h-3zM759 208h1v24h-1zM761 208h1v24h-1zM772 221h1v2h-1zM772 232h1v8h-1zM771 223h3v1h-3zM771 231h3v1h-3zM771 224h1v7h-1zM773 224h1v7h-1zM778 191h1v19h-1zM778 224h1v5h-1zM777 210h3v1h-3zM777 223h3v1h-3zM777 211h1v12h-1zM779 211h1v12h-1zM790 219h1v6h-1zM790 230h1v10h-1zM789 225h3v1h-3zM789 229h3v1h-3zM789 226h1v3h-1zM791 226h1v3h-1zM795 222h1v1h-1zM795 226h1v14h-1zM794 223h3v1h-3zM794 225h3v1h-3zM794 224h1v1h-1zM796 224h1v1h-1zM801 226h1v3h-1zM800 199h3v1h-3zM800 225h3v1h-3zM800 200h1v25h-1zM802 200h1v25h-1zM831 221h1v10h-1zM831 233h1v1h-1zM830 231h3v2h-3zM837 208h1v1h-1zM836 209h3v1h-3zM836 229h3v1h-3zM836 210h1v19h-1zM838 210h1v19h-1zM842 200h1v9h-1zM842 211h1v3h-1zM841 209h3v2h-3zM872 255h1v1h-1zM872 272h1v4h-1zM871 256h3v1h-3zM871 271h3v1h-3zM871 257h1v14h-1zM873 257h1v14h-1zM884 259h1v5h-1zM883 203h3v1h-3zM883 258h3v1h-3zM883 204h1v54h-1zM885 204h1v54h-1zM889 186h1v19h-1zM889 217h1v10h-1zM888 205h3v1h-3zM888 216h3v1h-3zM888 206h1v10h-1zM890 206h1v10h-1zM907 171h1v23h-1zM906 194h3v1h-3zM906 207h3v1h-3zM906 195h1v12h-1zM908 195h1v12h-1zM913 191h1v5h-1zM912 196h3v1h-3zM912 220h3v1h-3zM912 197h1v23h-1zM914 197h1v23h-1zM925 182h1v1h-1zM924 183h3v1h-3zM924 196h3v1h-3zM924 184h1v12h-1zM926 184h1v12h-1zM942 213h1v1h-1zM941 201h3v1h-3zM941 212h3v1h-3zM941 202h1v10h-1zM943 202h1v10h-1zM948 200h1v10h-1zM947 183h3v1h-3zM947 199h3v1h-3zM947 184h1v15h-1zM949 184h1v15h-1zM960 180h1v1h-1zM960 193h1v3h-1zM959 181h3v1h-3zM959 192h3v1h-3zM959 182h1v10h-1zM961 182h1v10h-1zM995 199h1v10h-1zM995 215h1v8h-1zM994 209h3v1h-3zM994 214h3v1h-3zM994 210h1v4h-1zM996 210h1v4h-1zM1001 200h1v1h-1zM1001 210h1v2h-1zM1000 201h3v1h-3zM1000 209h3v1h-3zM1000 202h1v7h-1zM1002 202h1v7h-1zM1007 202h1v7h-1zM1006 199h3v1h-3zM1006 201h3v1h-3zM1006 200h1v1h-1zM1008 200h1v1h-1zM1013 182h1v3h-1zM1013 200h1v5h-1zM1012 185h3v1h-3zM1012 199h3v1h-3zM1012 186h1v13h-1zM1014 186h1v13h-1zM1035 185h3v1h-3zM1035 205h3v1h-3zM1035 186h1v19h-1zM1037 186h1v19h-1zM1048 199h1v8h-1zM1047 183h3v1h-3zM1047 198h3v1h-3zM1047 184h1v14h-1zM1049 184h1v14h-1z"/><path shape-rendering="crispEdges" fill="#54ffff" d="M8 317h1v27h-1zM7 320h3v22h-3zM14 339h1v20h-1zM13 344h3v9h-3zM20 346h1v17h-1zM19 355h3v4h-3zM38 352h1v12h-1zM37 353h3v10h-3zM55 359h1v13h-1zM54 363h3v1h-3zM61 363h1v7h-1zM60 364h3v4h-3zM85 282h1v29h-1zM84 304h3v5h-3zM102 240h1v29h-1zM101 264h3v2h-3zM114 249h1v27h-1zM113 269h3v4h-3zM120 269h1v18h-1zM119 276h3v6h-3zM126 278h1v35h-1zM125 284h3v29h-3zM132 313h1v22h-1zM131 315h3v11h-3zM149 284h1v29h-1zM148 300h3v9h-3zM155 298h1v19h-1zM154 309h3v4h-3zM161 300h1v26h-1zM160 309h3v10h-3zM232 166h1v41h-1zM231 170h3v22h-3zM261 73h1v64h-1zM260 78h3v37h-3zM267 93h1v70h-1zM266 122h3v41h-3zM279 159h1v46h-1zM278 177h3v28h-3zM290 113h1v52h-1zM289 126h3v26h-3zM302 99h1v60h-1zM301 119h3v25h-3zM314 66h1v29h-1zM313 77h3v18h-3zM320 80h1v48h-1zM319 80h3v42h-3zM326 113h1v33h-1zM325 113h3v24h-3zM343 113h1v41h-1zM342 122h3v19h-3zM355 141h1v25h-1zM354 148h3v18h-3zM367 144h1v22h-1zM366 155h3v10h-3zM378 139h1v33h-1zM377 163h3v7h-3zM390 143h1v36h-1zM389 143h3v36h-3zM408 135h1v31h-1zM407 135h3v24h-3zM425 132h1v45h-1zM424 137h3v33h-3zM437 137h1v22h-1zM436 148h3v2h-3zM449 141h1v27h-1zM448 152h3v5h-3zM455 155h1v19h-1zM454 155h3v17h-3zM461 172h1v11h-1zM460 174h3v3h-3zM467 179h1v31h-1zM466 181h3v22h-3zM472 199h1v35h-1zM471 203h3v20h-3zM490 201h1v20h-1zM489 205h3v7h-3zM508 194h1v26h-1zM507 194h3v22h-3zM514 196h1v36h-1zM513 218h3v7h-3zM519 225h1v17h-1zM518 225h3v11h-3zM531 232h1v24h-1zM530 236h3v17h-3zM543 240h1v13h-1zM542 245h3v2h-3zM549 242h1v12h-1zM548 245h3v2h-3zM566 234h1v13h-1zM565 234h3v11h-3zM572 247h1v26h-1zM571 249h3v20h-3zM590 223h1v35h-1zM589 242h3v12h-3zM602 231h1v14h-1zM601 234h3v6h-3zM607 236h1v13h-1zM606 242h3v5h-3zM619 234h1v13h-1zM618 238h3v2h-3zM631 227h1v24h-1zM630 236h3v2h-3zM637 220h1v27h-1zM636 240h3v2h-3zM643 234h1v35h-1zM642 243h3v22h-3zM666 227h1v18h-1zM665 229h3v13h-3zM690 231h1v11h-1zM689 234h3v4h-3zM696 232h1v10h-1zM695 238h3v2h-3zM701 238h1v24h-1zM700 238h3v22h-3zM743 231h1v11h-1zM742 232h3v2h-3zM754 198h1v34h-1zM753 214h3v15h-3zM766 212h1v20h-1zM765 216h3v15h-3zM784 203h1v28h-1zM783 209h3v22h-3zM807 187h1v29h-1zM806 207h3v7h-3zM819 209h1v27h-1zM818 209h3v14h-3zM825 220h1v14h-1zM824 225h3v6h-3zM848 201h1v37h-1zM847 209h3v20h-3zM854 229h1v27h-1zM853 231h3v16h-3zM860 247h1v18h-1zM859 249h3v9h-3zM866 256h1v31h-1zM865 258h3v11h-3zM878 253h1v16h-1zM877 256h3v11h-3zM895 168h1v37h-1zM894 183h3v11h-3zM901 190h1v30h-1zM900 196h3v11h-3zM919 163h1v38h-1zM918 187h3v9h-3zM931 172h1v29h-1zM930 185h3v9h-3zM936 196h1v24h-1zM935 196h3v24h-3zM954 181h1v15h-1zM953 181h3v7h-3zM966 174h1v16h-1zM965 181h3v6h-3zM972 179h1v22h-1zM971 190h3v2h-3zM978 185h1v16h-1zM977 194h3v7h-3zM983 199h1v19h-1zM982 201h3v9h-3zM989 207h1v16h-1zM988 214h3v7h-3zM1019 179h1v24h-1zM1018 181h3v15h-3zM1025 181h1v20h-1zM1024 192h3v7h-3zM1042 181h1v26h-1zM1041 188h3v15h-3z"/><path shape-rendering="crispEdges" fill="#ffffff" d="M44 357h1v8h-1zM43 363h1v1h-1zM49 363h1v9h-1zM48 364h1v1h-1zM73 328h1v18h-1zM72 341h1v1h-1zM108 256h1v26h-1zM107 267h1v1h-1zM185 313h1v8h-1zM184 320h1v1h-1zM190 342h1v9h-1zM189 350h1v1h-1zM207 298h2v1h-2zM213 267h2v1h-2zM219 234h2v1h-2zM226 201h1v8h-1zM225 201h1v1h-1zM361 141h1v29h-1zM360 163h1v1h-1zM484 196h1v12h-1zM483 207h1v1h-1zM496 201h1v24h-1zM495 216h1v1h-1zM525 232h1v8h-1zM524 236h1v1h-1zM672 240h1v7h-1zM671 243h1v1h-1zM737 229h1v18h-1zM736 232h1v1h-1zM813 205h1v16h-1zM812 212h1v1h-1zM1030 196h1v9h-1zM1029 199h1v1h-1zM1054 179h1v8h-1zM1053 185h1v1h-1z"/><path shape-rendering="crispEdges" fill="#c0c0c0" d="M2 420h1052v1h-1052z"/><path shape-rendering="crispEdges" fill="#00ff00" d="M2 445h1052v1h-1052z"/><path shape-rendering="crispEdges" fill="#ff00ff" d="M2 594h1052v1h-1052z"/><path shape-rendering="crispEdges" fill="#ffff00" d="M2 619h1052v1h-1052z"/><polyline points="2.5,415.7 8.5,430.7 14.5,450.7 20.5,469.4 26.5,478.1 32.5,481.4 38.5,491.9 44.5,501.1 49.5,506.3 55.5,512.3 61.5,524.3 67.5,510.6 73.5,504.3 79.5,468.6 85.5,468.1 91.5,449.8 96.5,438.3 102.5,440.4 108.5,442.5 114.5,447.6 120.5,455.8 126.5,479.4 132.5,506.8 138.5,511.1 143.5,506.3 149.5,512.3 155.5,520.2 161.5,528.0 167.5,529.0 173.5,522.7 179.5,515.3 185.5,535.5 190.5,569.0 196.5,583.5 202.5,572.6 208.5,549.5 214.5,512.7 220.5,474.0 226.5,448.2 232.5,440.7 237.5,437.0 243.5,428.2 249.5,424.5 255.5,424.5 261.5,433.2 267.5,450.7 273.5,461.3 279.5,479.8 284.5,475.6 290.5,476.4 296.5,471.4 302.5,472.4 308.5,459.4 314.5,452.4 320.5,460.7 326.5,474.4 331.5,487.2 337.5,496.0 343.5,508.4 349.5,517.8 355.5,540.8 361.5,553.3 367.5,563.0 373.5,564.3 378.5,570.1 384.5,560.4 390.5,573.3 396.5,571.0 402.5,567.4 408.5,575.6 414.5,565.8 420.5,561.1 425.5,579.8 431.5,565.0 437.5,550.0 443.5,540.2 449.5,542.6 455.5,560.1 461.5,577.0 467.5,594.8 472.5,603.0 478.5,599.8 484.5,594.0 490.5,593.6 496.5,596.3 502.5,590.3 508.5,594.3 514.5,604.8 519.5,613.5 525.5,619.8 531.5,625.2 537.5,625.5 543.5,626.5 549.5,625.8 555.5,622.5 560.5,616.0 566.5,615.0 572.5,614.5 578.5,613.5 584.5,605.5 590.5,602.5 596.5,581.1 602.5,572.3 607.5,573.1 613.5,566.1 619.5,558.6 625.5,551.1 631.5,523.7 637.5,515.4 643.5,545.4 649.5,559.4 654.5,547.9 660.5,511.2 666.5,507.5 672.5,507.0 678.5,503.7 684.5,493.0 690.5,490.2 696.5,492.4 701.5,524.9 707.5,551.1 713.5,551.1 719.5,528.6 725.5,506.2 731.5,487.9 737.5,479.4 743.5,475.5 748.5,475.5 754.5,499.2 760.5,497.4 766.5,516.1 772.5,523.1 778.5,517.4 784.5,530.6 790.5,535.6 795.5,536.1 801.5,517.9 807.5,516.1 813.5,514.4 819.5,522.4 825.5,537.3 831.5,551.1 837.5,542.3 842.5,537.3 848.5,553.1 854.5,573.5 860.5,592.2 866.5,594.2 872.5,585.5 878.5,588.0 884.5,537.0 889.5,506.0 895.5,487.2 901.5,482.5 907.5,472.2 913.5,465.3 919.5,463.8 925.5,455.3 931.5,456.5 936.5,473.1 942.5,473.1 948.5,460.0 954.5,455.2 960.5,448.2 966.5,446.2 972.5,449.4 978.5,458.2 983.5,473.1 989.5,490.6 995.5,498.1 1001.5,513.1 1007.5,524.3 1013.5,511.3 1019.5,518.1 1025.5,526.0 1030.5,533.5 1036.5,508.1 1042.5,521.1 1048.5,493.1 1054.5,481.1" fill="none" stroke="#ffffff" stroke-width="1"/></g>
<text transform="scale(0.92 1)" x="1196.39 1202.00 1207.61 1214.49" y="71.6" fill="#ff3232" stroke="#ff3232" stroke-width="0.25" font-size="12.5" text-anchor="middle">4.60</text><text transform="scale(0.92 1)" x="1196.39 1202.00 1207.61 1214.49" y="108.6" fill="#ff3232" stroke="#ff3232" stroke-width="0.25" font-size="12.5" text-anchor="middle">4.40</text><text transform="scale(0.92 1)" x="1196.39 1202.00 1207.61 1214.49" y="145.6" fill="#ff3232" stroke="#ff3232" stroke-width="0.25" font-size="12.5" text-anchor="middle">4.20</text><text transform="scale(0.92 1)" x="1196.39 1202.00 1207.61 1214.49" y="181.6" fill="#ff3232" stroke="#ff3232" stroke-width="0.25" font-size="12.5" text-anchor="middle">4.00</text><text transform="scale(0.92 1)" x="1196.39 1202.00 1207.61 1214.49" y="218.6" fill="#ff3232" stroke="#ff3232" stroke-width="0.25" font-size="12.5" text-anchor="middle">3.80</text><text transform="scale(0.92 1)" x="1196.39 1202.00 1207.61 1214.49" y="255.6" fill="#ff3232" stroke="#ff3232" stroke-width="0.25" font-size="12.5" text-anchor="middle">3.60</text><text transform="scale(0.92 1)" x="1196.39 1202.00 1207.61 1214.49" y="291.6" fill="#ff3232" stroke="#ff3232" stroke-width="0.25" font-size="12.5" text-anchor="middle">3.40</text><text transform="scale(0.92 1)" x="1196.39 1202.00 1207.61 1214.49" y="328.6" fill="#ff3232" stroke="#ff3232" stroke-width="0.25" font-size="12.5" text-anchor="middle">3.20</text><text transform="scale(0.92 1)" x="1196.39 1202.00 1207.61 1214.49" y="365.6" fill="#ff3232" stroke="#ff3232" stroke-width="0.25" font-size="12.5" text-anchor="middle">3.00</text><text transform="scale(0.92 1)" x="1189.51 1196.39 1202.00 1207.61 1214.49" y="462.3" fill="#ff3232" stroke="#ff3232" stroke-width="0.25" font-size="12.5" text-anchor="middle">50.00</text><text transform="scale(0.92 1)" x="1189.51 1196.39 1202.00 1207.61 1214.49" y="495.3" fill="#ff3232" stroke="#ff3232" stroke-width="0.25" font-size="12.5" text-anchor="middle">25.00</text><text transform="scale(0.92 1)" x="1196.39 1202.00 1207.61 1214.49" y="525.3" fill="#ff3232" stroke="#ff3232" stroke-width="0.25" font-size="12.5" text-anchor="middle">0.00</text><rect x="1076" y="264" width="50" height="16" fill="#000080"/><text transform="scale(0.92 1)" x="1173.56 1179.17 1184.79 1191.67" y="276.5" fill="#c0c0c0" stroke="#c0c0c0" stroke-width="0.25" font-size="12.5" text-anchor="middle">3.44</text><text x="27.50" y="13.56" fill="#c0c0c0" stroke="#c0c0c0" stroke-width="0.25" font-size="12">分时</text><text x="67.97" y="13.56" fill="#c0c0c0" stroke="#c0c0c0" stroke-width="0.25" font-size="12">分钟</text><text x="61.30" y="12.86" fill="#c0c0c0" font-size="12">1</text><text x="106.67" y="13.56" fill="#c0c0c0" stroke="#c0c0c0" stroke-width="0.25" font-size="12">分钟</text><text x="100.00" y="12.86" fill="#c0c0c0" font-size="12">5</text><text x="152.64" y="13.56" fill="#c0c0c0" stroke="#c0c0c0" stroke-width="0.25" font-size="12">分钟</text><text x="139.30" y="12.86" fill="#c0c0c0" font-size="12">15</text><text x="198.34" y="13.56" fill="#c0c0c0" stroke="#c0c0c0" stroke-width="0.25" font-size="12">分钟</text><text x="185.00" y="12.86" fill="#c0c0c0" font-size="12">30</text><text x="244.64" y="13.56" fill="#c0c0c0" stroke="#c0c0c0" stroke-width="0.25" font-size="12">分钟</text><text x="231.30" y="12.86" fill="#c0c0c0" font-size="12">60</text><text x="278.00" y="13.56" fill="#54ffff" stroke="#54ffff" stroke-width="0.25" font-size="12">日线</text><text x="312.00" y="13.56" fill="#c0c0c0" stroke="#c0c0c0" stroke-width="0.25" font-size="12">周线</text><text x="346.00" y="13.56" fill="#c0c0c0" stroke="#c0c0c0" stroke-width="0.25" font-size="12">月线</text><text x="379.00" y="13.56" fill="#c0c0c0" stroke="#c0c0c0" stroke-width="0.25" font-size="12">多周期</text><text x="423.00" y="13.56" fill="#c0c0c0" stroke="#c0c0c0" stroke-width="0.25" font-size="12">更多</text><text x="815.00" y="13.56" fill="#c0c0c0" stroke="#c0c0c0" stroke-width="0.25" font-size="12">复权</text><text x="850.00" y="13.56" fill="#c0c0c0" stroke="#c0c0c0" stroke-width="0.25" font-size="12">叠加</text><text x="885.00" y="13.56" fill="#c0c0c0" stroke="#c0c0c0" stroke-width="0.25" font-size="12">多股</text><text x="920.00" y="13.56" fill="#c0c0c0" stroke="#c0c0c0" stroke-width="0.25" font-size="12">统计</text><text x="955.00" y="13.56" fill="#c0c0c0" stroke="#c0c0c0" stroke-width="0.25" font-size="12">画线</text><text x="992.50" y="12.86" fill="#c0c0c0" font-size="12">F10</text><text x="1025.00" y="13.56" fill="#c0c0c0" stroke="#c0c0c0" stroke-width="0.25" font-size="12">标记</text><text x="1064.01" y="13.56" fill="#c0c0c0" stroke="#c0c0c0" stroke-width="0.25" font-size="12">自选</text><text x="1057.00" y="12.86" fill="#c0c0c0" font-size="12">+</text><text x="1096.00" y="13.56" fill="#c0c0c0" stroke="#c0c0c0" stroke-width="0.25" font-size="12">返回</text><path d="M451 4.5L455.5 9L451 13.5" fill="none" stroke="#c0c0c0" stroke-width="1"/><rect x="5.5" y="3.5" width="11" height="10" rx="2.2" fill="none" stroke="#909090" stroke-width="1.25"/><rect x="12" y="5.5" width="3" height="6.5" fill="#909090"/><text x="3.00" y="33.56" fill="#c0c0c0" stroke="#c0c0c0" stroke-width="0.25" font-size="12">曙光股份</text><text x="55.00" y="33.56" fill="#c0c0c0" stroke="#c0c0c0" stroke-width="0.25" font-size="12">日线</text><text x="82.33" y="33.56" fill="#c0c0c0" stroke="#c0c0c0" stroke-width="0.25" font-size="12">前复权</text><text x="51.00" y="32.86" fill="#c0c0c0" font-size="12">(</text><text x="79.00" y="32.86" fill="#c0c0c0" font-size="12">.</text><text x="118.33" y="32.86" fill="#c0c0c0" font-size="12">)</text><circle cx="134" cy="28.8" r="6" fill="#808080"/><path d="M130.8 27.2L134 30.6L137.2 27.2" fill="none" stroke="#101010" stroke-width="1.3"/><path d="M1047.5 24.3L1052.7 29.5L1047.5 34.7L1042.3 29.5Z" fill="none" stroke="#808080" stroke-width="0.9"/><rect x="1060.5" y="24.5" width="11" height="10" rx="2.2" fill="none" stroke="#909090" stroke-width="1.25"/><rect x="1067" y="26.3" width="3" height="6.5" fill="#909090"/><path shape-rendering="crispEdges" fill="#c0c0c0" d="M256 39h3v1h-3zM255 40h1v3h-1zM256 40h1v1h-1zM257 41h3v1h-3zM260 42h2v1h-2zM262 43h3v1h-3zM265 44h2v1h-2z"/><text transform="scale(0.92 1)" x="296.39 302.00 307.61 314.49" y="50.3" fill="#c0c0c0" stroke="#c0c0c0" stroke-width="0.25" font-size="12.5" text-anchor="middle">4.75</text><path d="M197 377.5H208M197 377.5L200 374.5M197 377.5L200 380.5" fill="none" stroke="#c0c0c0" stroke-width="1"/><text transform="scale(0.92 1)" x="229.54 235.15 240.77 247.65" y="383.3" fill="#c0c0c0" stroke="#c0c0c0" stroke-width="0.25" font-size="12.5" text-anchor="middle">2.91</text><path d="M183 382h10l3 3v10h-13z" fill="#008000"/><text x="183.50" y="393.06" fill="#ffffff" stroke="#ffffff" stroke-width="0.25" font-size="12">跌</text><path d="M277 382h10l3 3v10h-13z" fill="#96501e"/><text x="277.50" y="393.06" fill="#ffffff" stroke="#ffffff" stroke-width="0.25" font-size="12">榜</text><path d="M877 382h10l3 3v10h-13z" fill="#800000"/><text x="877.50" y="393.06" fill="#ffffff" stroke="#ffffff" stroke-width="0.25" font-size="12">涨</text><path d="M988 382h10l3 3v10h-13z" fill="#1a4480"/><text x="988.50" y="393.06" fill="#ffffff" stroke="#ffffff" stroke-width="0.25" font-size="12">财</text><path d="M236.5 385.5L240.5 390H232.5Z" fill="#ff0000"/><path d="M236.5 389.8L240.8 394.6H232.2Z" fill="#00a0ff"/><circle cx="8" cy="405.2" r="6" fill="#808080"/><path d="M4.8 403.6L8 407L11.2 403.6" fill="none" stroke="#101010" stroke-width="1.3"/><text x="18.00" y="409.56" fill="#c0c0c0" stroke="#c0c0c0" stroke-width="0.25" font-size="12">股朋指标网</text><text x="83.00" y="409.56" fill="#ffffff" stroke="#ffffff" stroke-width="0.25" font-size="12">千机线</text><text x="119.00" y="408.86" fill="#ffffff" font-size="12">:</text><text x="126.00" y="408.86" fill="#ffffff" font-size="12">32.08</text><text x="161.00" y="409.56" fill="#ffff00" stroke="#ffff00" stroke-width="0.25" font-size="12">太阴</text><text x="185.00" y="408.86" fill="#ffff00" font-size="12">:</text><text x="191.00" y="408.86" fill="#ffff00" font-size="12">-80.00</text><text x="231.00" y="409.56" fill="#ff00ff" stroke="#ff00ff" stroke-width="0.25" font-size="12">少阴</text><text x="255.00" y="408.86" fill="#ff00ff" font-size="12">:</text><text x="261.00" y="408.86" fill="#ff00ff" font-size="12">-60.00</text><text x="301.00" y="409.56" fill="#00ff00" stroke="#00ff00" stroke-width="0.25" font-size="12">少阳</text><text x="325.00" y="408.86" fill="#00ff00" font-size="12">:</text><text x="331.00" y="408.86" fill="#00ff00" font-size="12">60.00</text><text x="367.00" y="409.56" fill="#c0c0c0" stroke="#c0c0c0" stroke-width="0.25" font-size="12">太阳</text><text x="391.00" y="408.86" fill="#c0c0c0" font-size="12">:</text><text x="397.00" y="408.86" fill="#c0c0c0" font-size="12">80.00</text><text x="96.00" y="449.76" fill="#ff0000" stroke="#ff0000" stroke-width="0.38" font-size="12">减仓</text><text x="232.00" y="449.76" fill="#ff0000" stroke="#ff0000" stroke-width="0.38" font-size="12">减仓</text><text x="561.50" y="623.56" fill="#00ffff" stroke="#00ffff" stroke-width="0.36" font-size="12">低吸</text><text x="577.50" y="623.56" fill="#00ffff" stroke="#00ffff" stroke-width="0.36" font-size="12">低吸</text><path shape-rendering="crispEdges" fill="#b00000" d="M43 630h1v20h-1zM166 630h1v17h-1zM283 630h1v17h-1zM395 630h1v17h-1zM513 630h1v17h-1zM648 630h1v17h-1zM900 630h1v17h-1zM74 631h1v2h-1zM105 631h1v2h-1zM135 631h1v2h-1zM195 631h1v2h-1zM225 631h1v2h-1zM254 631h1v2h-1zM311 631h1v2h-1zM339 631h1v2h-1zM367 631h1v2h-1zM425 631h1v2h-1zM454 631h1v2h-1zM484 631h1v2h-1zM547 631h1v2h-1zM581 631h1v2h-1zM614 631h1v2h-1zM679 631h1v2h-1zM710 631h1v2h-1zM740 631h1v2h-1zM868 631h1v2h-1zM925 631h1v2h-1zM950 631h1v2h-1zM976 631h1v2h-1zM73 647h1v3h-1zM115 647h1v3h-1zM145 647h1v3h-1zM177 647h1v3h-1zM207 647h1v3h-1zM241 647h1v3h-1zM272 647h1v3h-1zM283 647h1v3h-1zM308 647h1v3h-1zM332 647h1v3h-1zM364 647h1v3h-1zM390 647h1v3h-1zM422 647h1v3h-1zM480 647h1v3h-1zM508 647h1v3h-1zM536 647h1v3h-1zM569 647h1v3h-1zM599 647h1v3h-1zM628 647h1v3h-1zM663 647h1v3h-1zM696 647h1v3h-1zM735 647h1v3h-1zM766 647h1v3h-1zM807 647h1v3h-1zM847 647h1v3h-1zM871 647h1v3h-1z"/><path shape-rendering="crispEdges" fill="#d0d0d0" d="M5 648h1v2h-1zM8 648h1v2h-1zM9 648h1v2h-1zM13 648h1v2h-1zM14 648h1v2h-1zM17 648h1v2h-1zM20 648h1v2h-1zM21 648h1v2h-1zM51 648h1v2h-1zM831 648h1v2h-1z"/><path shape-rendering="crispEdges" fill="#54ffff" d="M845 648h8v2h-8zM856 648h9v1h-9z"/><text x="29.69" y="643.56" fill="#ff3232" stroke="#ff3232" stroke-width="0.25" font-size="12">年</text><text x="3.00" y="642.86" fill="#ff3232" font-size="12">2025</text><text x="45.00" y="642.86" fill="#ff3232" font-size="12">3</text><text x="168.00" y="642.86" fill="#ff3232" font-size="12">4</text><text x="285.00" y="642.86" fill="#ff3232" font-size="12">5</text><text x="397.00" y="642.86" fill="#ff3232" font-size="12">6</text><text x="515.00" y="642.86" fill="#ff3232" font-size="12">7</text><text x="650.00" y="642.86" fill="#ff3232" font-size="12">8</text><text x="901.30" y="642.86" fill="#ff3232" font-size="12">10</text><rect x="772" y="631" width="78" height="15" fill="#000080" shape-rendering="crispEdges"/><path shape-rendering="crispEdges" fill="#b00000" d="M772 630h1v17h-1zM849 630h1v17h-1z"/><text x="836.38" y="643.06" fill="#ffffff" stroke="#ffffff" stroke-width="0.25" font-size="12">一</text><text x="773.00" y="642.36" fill="#ffffff" font-size="12">2025/09/01/</text><rect x="984" y="600" width="146" height="50" fill="#000000"/><text x="1017.50" y="620.34" fill="#ffffff" font-size="18" font-weight="bold">股朋指标网</text><text x="991" y="638.3" fill="#f0ecec" stroke="#f0ecec" stroke-width="0.45" font-size="16" letter-spacing="1.33">www.7gpzb.com</text>
</svg>
</body></html>
